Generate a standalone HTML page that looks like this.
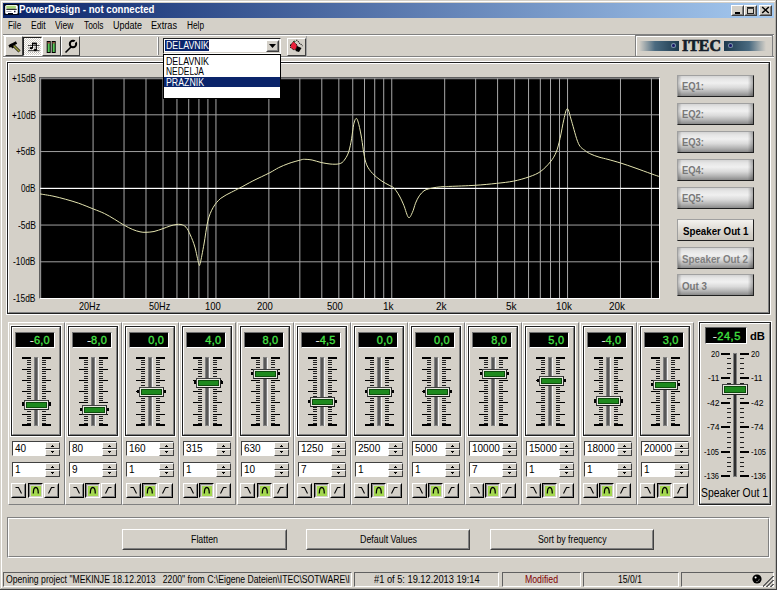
<!DOCTYPE html>
<html><head><meta charset="utf-8"><title>PowerDesign</title>
<style>
html,body{margin:0;padding:0;width:777px;height:590px;overflow:hidden;background:#d4d0c8;}
body{position:relative;font-family:'Liberation Sans', sans-serif;}
body>div,body>svg{position:absolute;}
</style></head><body>
<div style="left:0px;top:0px;width:777px;height:590px;background:#d4d0c8;"></div>
<div style="left:1px;top:1px;width:774px;height:1px;background:#ffffff;"></div>
<div style="left:1px;top:1px;width:1px;height:587px;background:#ffffff;"></div>
<div style="left:0px;top:589px;width:777px;height:1px;background:#404040;"></div>
<div style="left:776px;top:0px;width:1px;height:590px;background:#404040;"></div>
<div style="left:1px;top:588px;width:775px;height:1px;background:#b4b2ac;"></div>
<div style="left:775px;top:1px;width:1px;height:588px;background:#b4b2ac;"></div>
<div style="left:3px;top:3px;width:771px;height:15px;background:linear-gradient(to right,#0a246a,#a6caf0)"></div>
<svg style="left:4px;top:4px" width="15" height="12" viewBox="0 0 15 12"><rect x="0" y="0" width="15" height="11" fill="#020616"/><rect x="1.2" y="1" width="12.6" height="9" rx="1.6" fill="#fff"/><rect x="2.3" y="1.7" width="9.6" height="3.1" rx="0.8" fill="#a8d878"/><rect x="2.3" y="4.8" width="10.4" height="1" fill="#000"/><rect x="2.5" y="7" width="5" height="0.8" fill="#9090a0"/><rect x="10" y="6.8" width="1.5" height="1.5" fill="#202040"/><rect x="4" y="9" width="5" height="2" fill="#020616"/></svg>
<div style="left:19.30px;top:5.30px;font-family:'Liberation Sans', sans-serif;font-size:10px;font-weight:bold;color:#fff;line-height:1;white-space:pre;transform:scaleX(0.9639);transform-origin:0 0;">PowerDesign - not connected</div>
<div style="left:731px;top:5px;width:13px;height:11px;box-sizing:border-box;border:1px solid;border-color:#ffffff #404040 #404040 #ffffff;background:#d4d0c8;"></div>
<div style="left:732px;top:6px;width:11px;height:9px;box-sizing:border-box;border:1px solid;border-color:#d4d0c8 #808080 #808080 #d4d0c8;"></div>
<div style="left:744px;top:5px;width:13px;height:11px;box-sizing:border-box;border:1px solid;border-color:#ffffff #404040 #404040 #ffffff;background:#d4d0c8;"></div>
<div style="left:745px;top:6px;width:11px;height:9px;box-sizing:border-box;border:1px solid;border-color:#d4d0c8 #808080 #808080 #d4d0c8;"></div>
<div style="left:759px;top:5px;width:13px;height:11px;box-sizing:border-box;border:1px solid;border-color:#ffffff #404040 #404040 #ffffff;background:#d4d0c8;"></div>
<div style="left:760px;top:6px;width:11px;height:9px;box-sizing:border-box;border:1px solid;border-color:#d4d0c8 #808080 #808080 #d4d0c8;"></div>
<div style="left:735px;top:12px;width:5px;height:2px;background:#000;"></div>
<div style="left:747px;top:7px;width:7px;height:7px;box-sizing:border-box;border:1px solid;border-color:#202020 #202020 #202020 #202020;"></div>
<div style="left:747px;top:8px;width:7px;height:1px;background:#404040;"></div>
<svg style="left:761px;top:6px" width="9" height="8" viewBox="0 0 9 8"><path d="M1.2 1 L7.8 7 M7.8 1 L1.2 7" stroke="#000" stroke-width="1.5"/></svg>
<div style="left:8.00px;top:20.50px;font-family:'Liberation Sans', sans-serif;font-size:10px;font-weight:normal;color:#000;line-height:1;white-space:pre;transform:scaleX(0.8186);transform-origin:0 0;">File</div>
<div style="left:30.50px;top:20.50px;font-family:'Liberation Sans', sans-serif;font-size:10px;font-weight:normal;color:#000;line-height:1;white-space:pre;transform:scaleX(0.8471);transform-origin:0 0;">Edit</div>
<div style="left:55.00px;top:20.50px;font-family:'Liberation Sans', sans-serif;font-size:10px;font-weight:normal;color:#000;line-height:1;white-space:pre;transform:scaleX(0.8558);transform-origin:0 0;">View</div>
<div style="left:83.50px;top:20.50px;font-family:'Liberation Sans', sans-serif;font-size:10px;font-weight:normal;color:#000;line-height:1;white-space:pre;transform:scaleX(0.8348);transform-origin:0 0;">Tools</div>
<div style="left:113.30px;top:20.50px;font-family:'Liberation Sans', sans-serif;font-size:10px;font-weight:normal;color:#000;line-height:1;white-space:pre;transform:scaleX(0.8992);transform-origin:0 0;">Update</div>
<div style="left:151.40px;top:20.50px;font-family:'Liberation Sans', sans-serif;font-size:10px;font-weight:normal;color:#000;line-height:1;white-space:pre;transform:scaleX(0.9173);transform-origin:0 0;">Extras</div>
<div style="left:186.90px;top:20.50px;font-family:'Liberation Sans', sans-serif;font-size:10px;font-weight:normal;color:#000;line-height:1;white-space:pre;transform:scaleX(0.8261);transform-origin:0 0;">Help</div>
<div style="left:3px;top:34px;width:771px;height:1px;background:#808080;"></div>
<div style="left:3px;top:35px;width:771px;height:1px;background:#ffffff;"></div>
<div style="left:3px;top:56px;width:771px;height:1px;background:#808080;"></div>
<div style="left:3px;top:57px;width:771px;height:1px;background:#ffffff;"></div>
<div style="left:4px;top:36px;width:1px;height:20px;background:#ffffff;"></div>
<div style="left:5px;top:36px;width:18px;height:20px;box-sizing:border-box;border:1px solid;border-color:#ffffff #404040 #404040 #ffffff;"></div>
<div style="left:23px;top:37px;width:19px;height:19px;box-sizing:border-box;border:1px solid;border-color:#202020 #fff #fff #202020;background:repeating-conic-gradient(#ffffff 0 25%,#d4d0c8 0 50%) 0 0/2px 2px"></div>
<div style="left:42px;top:36px;width:19px;height:20px;box-sizing:border-box;border:1px solid;border-color:#ffffff #404040 #404040 #ffffff;"></div>
<div style="left:61px;top:36px;width:19px;height:20px;box-sizing:border-box;border:1px solid;border-color:#ffffff #404040 #404040 #ffffff;"></div>
<svg style="left:5px;top:36px" width="18" height="20" viewBox="0 0 18 20"><path d="M8.5 9.5 L14.5 15.5" stroke="#202010" stroke-width="3"/><path d="M8.5 9.5 L14.5 15.5" stroke="#a0a040" stroke-width="1.4"/><path d="M4 10.5 L11.5 6.5" stroke="#000" stroke-width="2.6"/><path d="M5.5 8 L8 12" stroke="#000" stroke-width="2"/></svg>
<svg style="left:23px;top:36px" width="19" height="20" viewBox="0 0 19 20"><path d="M5 9.5 H16.5 M5 14.5 H16.5" stroke="#505050" stroke-width="1"/><path d="M5 12 H16.5 M5 16 H16.5" stroke="#909090" stroke-width="1" stroke-dasharray="1 1"/><path d="M9.5 7.5 V12 M13.3 7.5 V14" stroke="#000" stroke-width="1.1"/><path d="M9 7.5 H13.8" stroke="#000" stroke-width="1.8"/><ellipse cx="8.2" cy="12.2" rx="1.6" ry="1.1" fill="#000"/><ellipse cx="12.2" cy="14.2" rx="1.6" ry="1.1" fill="#000"/></svg>
<svg style="left:42px;top:36px" width="19" height="20" viewBox="0 0 19 20"><rect x="5.2" y="5.5" width="3" height="11" fill="#58c858" stroke="#000" stroke-width="1"/><rect x="10.2" y="5.5" width="3" height="11" fill="#58c858" stroke="#000" stroke-width="1"/><rect x="5.7" y="6" width="2" height="1.5" fill="#a04040"/><rect x="10.7" y="6" width="2" height="1.5" fill="#a04040"/></svg>
<svg style="left:61px;top:36px" width="19" height="20" viewBox="0 0 19 20"><path d="M4.5 16.5 L10 11" stroke="#000" stroke-width="1.6"/><circle cx="12" cy="8" r="3.2" fill="none" stroke="#000" stroke-width="2"/><path d="M12 8 L15.5 4.5" stroke="#d4d0c8" stroke-width="1.6"/></svg>
<div style="left:157px;top:37px;width:1px;height:18px;background:#ffffff;"></div>
<div style="left:158px;top:37px;width:1px;height:18px;background:#808080;"></div>
<div style="left:163px;top:38px;width:118px;height:16px;box-sizing:border-box;border:1px solid;border-color:#202020 #ffffff #ffffff #202020;background:#ffffff;"></div>
<div style="left:164px;top:39px;width:116px;height:14px;box-sizing:border-box;border:1px solid;border-color:#ffffff #d4d0c8 #d4d0c8 #ffffff;"></div>
<div style="left:165px;top:40px;width:44px;height:11px;background:#0a246a;"></div>
<div style="left:166.00px;top:40.50px;font-family:'Liberation Sans', sans-serif;font-size:10px;font-weight:normal;color:#fff;line-height:1;white-space:pre;transform:scaleX(0.8823);transform-origin:0 0;">DELAVNIK</div>
<div style="left:266px;top:40px;width:13px;height:12px;box-sizing:border-box;border:1px solid;border-color:#ffffff #404040 #404040 #ffffff;background:#d4d0c8;"></div>
<div style="left:267px;top:41px;width:11px;height:10px;box-sizing:border-box;border:1px solid;border-color:#d4d0c8 #808080 #808080 #d4d0c8;"></div>
<svg style="left:269px;top:44px" width="7" height="4" viewBox="0 0 7 4"><path d="M0 0 H7 L3.5 4 Z" fill="#000"/></svg>
<div style="left:287px;top:38px;width:19px;height:18px;box-sizing:border-box;border:1px solid;border-color:#ffffff #404040 #404040 #ffffff;"></div>
<div style="left:306px;top:36px;width:1px;height:21px;background:#a0a0a0;"></div>
<svg style="left:286px;top:37px" width="20" height="19" viewBox="0 0 20 19"><path d="M4.5 8 L7.5 4.5 L11 8 L11 11.5 L8 13 L4.5 10.5 Z" fill="#e8203a" stroke="#000" stroke-width="1" stroke-dasharray="1.2 0.8"/><path d="M7 4.5 L8.5 3.5 L10 5 Z" fill="#104010"/><path d="M11 9 L15.5 11 L13 15 L9.5 14 Z" fill="#000"/><path d="M10.5 3 L16.5 9" stroke="#000" stroke-width="1.1" stroke-dasharray="1 1"/></svg>
<div style="left:635px;top:35px;width:138px;height:22px;box-sizing:border-box;border:1px solid;border-color:#808080 #808080 #808080 #808080;"></div>
<div style="left:636px;top:36px;width:136px;height:20px;box-sizing:border-box;border:1px solid;border-color:#ffffff #d4d0c8 #d4d0c8 #ffffff;"></div>
<div style="left:639px;top:41px;width:40px;height:10px;background:linear-gradient(to right,#d4d0c8,#4a6a80 40%,#1c3a4e)"></div>
<div style="left:724px;top:41px;width:42px;height:10px;background:linear-gradient(to right,#1c3a4e,#4a6a80 60%,#d4d0c8)"></div>
<div style="left:672px;top:44px;width:3px;height:3px;border-radius:50%;background:#18186a;box-shadow:0 0 0 1px #7890a8"></div>
<div style="left:729px;top:44px;width:3px;height:3px;border-radius:50%;background:#18186a;box-shadow:0 0 0 1px #7890a8"></div>
<div style="left:681.80px;top:36.92px;font-family:'Liberation Serif', serif;font-size:17.5px;font-weight:bold;color:#141e2a;line-height:1;white-space:pre;transform:scaleX(0.9113);transform-origin:0 0;-webkit-text-stroke:0.7px #141e2a;">ITEC</div>
<div style="left:6px;top:61px;width:765px;height:254px;box-sizing:border-box;border:1px solid;border-color:#ffffff #ffffff #ffffff #ffffff;"></div>
<div style="left:7px;top:62px;width:763px;height:252px;box-sizing:border-box;border:1px solid;border-color:#202020 #202020 #202020 #202020;"></div>
<div style="left:8px;top:63px;width:761px;height:250px;box-sizing:border-box;border:1px solid;border-color:#ffffff #808080 #808080 #ffffff;"></div>
<div style="left:39px;top:77px;width:621px;height:222px;box-sizing:border-box;border:1px solid;border-color:#606060 #ffffff #ffffff #606060;"></div>
<div style="left:40px;top:78px;width:619px;height:220px;background:#000;"></div>
<svg style="left:40px;top:78px" width="619" height="220" viewBox="0 0 619 220"><rect x="0.15" y="0" width="1" height="220" fill="#a8a8a8"/><rect x="52.57" y="0" width="1" height="220" fill="#a8a8a8"/><rect x="83.53" y="0" width="1" height="220" fill="#a8a8a8"/><rect x="105.49" y="0" width="1" height="220" fill="#a8a8a8"/><rect x="122.53" y="0" width="1" height="220" fill="#a8a8a8"/><rect x="136.45" y="0" width="1" height="220" fill="#a8a8a8"/><rect x="148.22" y="0" width="1" height="220" fill="#a8a8a8"/><rect x="158.41" y="0" width="1" height="220" fill="#a8a8a8"/><rect x="167.41" y="0" width="1" height="220" fill="#a8a8a8"/><rect x="175.45" y="0" width="1" height="220" fill="#a8a8a8"/><rect x="228.37" y="0" width="1" height="220" fill="#a8a8a8"/><rect x="259.33" y="0" width="1" height="220" fill="#a8a8a8"/><rect x="281.29" y="0" width="1" height="220" fill="#a8a8a8"/><rect x="298.33" y="0" width="1" height="220" fill="#a8a8a8"/><rect x="312.25" y="0" width="1" height="220" fill="#a8a8a8"/><rect x="324.02" y="0" width="1" height="220" fill="#a8a8a8"/><rect x="334.21" y="0" width="1" height="220" fill="#a8a8a8"/><rect x="343.21" y="0" width="1" height="220" fill="#a8a8a8"/><rect x="351.25" y="0" width="1" height="220" fill="#a8a8a8"/><rect x="404.17" y="0" width="1" height="220" fill="#a8a8a8"/><rect x="435.13" y="0" width="1" height="220" fill="#a8a8a8"/><rect x="457.09" y="0" width="1" height="220" fill="#a8a8a8"/><rect x="474.13" y="0" width="1" height="220" fill="#a8a8a8"/><rect x="488.05" y="0" width="1" height="220" fill="#a8a8a8"/><rect x="499.82" y="0" width="1" height="220" fill="#a8a8a8"/><rect x="510.01" y="0" width="1" height="220" fill="#a8a8a8"/><rect x="519.01" y="0" width="1" height="220" fill="#a8a8a8"/><rect x="527.05" y="0" width="1" height="220" fill="#a8a8a8"/><rect x="579.97" y="0" width="1" height="220" fill="#a8a8a8"/><rect x="610.93" y="0" width="1" height="220" fill="#a8a8a8"/><rect x="0" y="0.20" width="619" height="1" fill="#a0a0a0"/><rect x="0" y="36.30" width="619" height="1" fill="#a0a0a0"/><rect x="0" y="73.05" width="619" height="1" fill="#a0a0a0"/><rect x="0" y="109.80" width="619" height="1.2" fill="#ffffff"/><rect x="0" y="146.55" width="619" height="1" fill="#a0a0a0"/><rect x="0" y="183.30" width="619" height="1" fill="#a0a0a0"/><path d="M0.0 115.9 C2.1 116.3 8.6 117.2 12.9 118.1 C17.2 119.0 21.4 120.1 25.7 121.3 C30.0 122.5 34.0 123.6 38.6 125.2 C43.2 126.8 49.1 129.3 53.4 131.0 C57.7 132.7 60.9 133.8 64.4 135.5 C67.9 137.2 71.3 139.3 74.6 141.3 C77.9 143.3 81.3 145.6 84.3 147.3 C87.3 149.0 90.1 150.4 92.7 151.5 C95.3 152.6 97.8 153.3 100.0 153.8 C102.2 154.3 103.7 154.4 106.0 154.3 C108.3 154.2 111.2 154.1 114.0 153.5 C116.8 152.9 120.3 151.5 123.0 150.6 C125.7 149.7 127.8 148.7 130.0 148.0 C132.2 147.3 134.2 146.8 136.0 146.6 C137.8 146.3 139.3 146.1 141.0 146.5 C142.7 146.9 144.4 147.5 146.0 149.2 C147.6 150.9 148.8 153.6 150.3 156.9 C151.8 160.2 153.5 164.3 154.9 169.1 C156.3 173.9 157.8 182.8 158.7 185.5 C159.6 188.2 159.3 188.6 160.2 185.3 C161.1 182.1 162.7 173.0 164.0 166.0 C165.3 159.0 166.3 149.3 167.8 143.2 C169.3 137.1 171.0 133.2 173.2 129.4 C175.4 125.6 177.8 122.8 180.8 120.3 C183.9 117.8 188.3 115.9 191.5 114.2 C194.7 112.5 196.4 111.8 200.0 109.9 C203.6 108.0 208.0 105.4 212.9 102.9 C217.8 100.4 225.3 97.0 229.6 94.8 C233.9 92.6 235.4 91.3 238.6 89.7 C241.8 88.1 245.2 86.7 248.9 85.4 C252.5 84.1 257.9 82.7 260.5 82.0 C263.1 81.3 262.5 81.3 264.4 81.3 C266.3 81.3 269.3 81.5 272.1 82.0 C274.9 82.5 277.7 83.8 281.1 84.5 C284.5 85.2 289.4 86.1 292.7 86.2 C296.0 86.3 298.7 86.2 300.8 85.3 C302.9 84.4 303.8 82.9 305.1 81.0 C306.4 79.1 307.6 77.2 308.7 73.8 C309.8 70.4 310.8 65.4 311.6 60.8 C312.4 56.2 312.9 49.8 313.7 46.4 C314.5 43.0 315.4 40.4 316.3 40.4 C317.2 40.4 317.9 43.0 318.8 46.4 C319.7 49.8 320.9 56.0 321.7 60.8 C322.5 65.6 323.0 70.9 323.8 75.2 C324.6 79.5 325.2 83.4 326.7 86.8 C328.1 90.2 330.1 92.8 332.5 95.4 C334.9 98.0 338.2 100.6 341.1 102.6 C344.0 104.6 347.8 106.5 349.8 107.6 C351.8 108.7 352.0 108.4 353.1 109.3 C354.2 110.2 355.1 111.2 356.2 112.8 C357.3 114.4 358.7 116.5 360.0 119.0 C361.3 121.5 362.5 124.1 363.9 127.5 C365.3 130.9 367.1 138.3 368.5 139.5 C369.9 140.7 371.2 136.8 372.4 134.4 C373.6 132.0 374.4 128.0 375.5 125.2 C376.6 122.4 377.9 119.9 379.3 117.8 C380.7 115.7 382.4 114.0 384.0 112.8 C385.6 111.7 386.6 111.5 388.6 110.9 C390.7 110.3 393.7 109.7 396.3 109.3 C398.9 108.9 401.7 108.8 404.0 108.6 C406.3 108.4 404.8 108.6 410.0 108.4 C415.2 108.2 427.4 107.8 435.1 107.3 C442.8 106.8 449.9 106.1 456.3 105.4 C462.7 104.7 468.2 104.2 473.7 103.1 C479.2 102.0 484.7 100.4 489.2 98.8 C493.7 97.2 497.2 95.9 500.7 93.4 C504.2 90.9 507.8 87.0 510.4 83.8 C513.0 80.6 514.6 78.0 516.2 74.1 C517.8 70.2 518.7 66.1 520.0 60.6 C521.3 55.1 522.7 46.3 523.9 41.3 C525.1 36.3 526.1 30.4 527.4 30.7 C528.7 31.0 529.8 37.4 531.6 43.2 C533.4 49.0 536.1 60.5 538.4 65.4 C540.6 70.3 543.0 70.8 545.1 72.6 C547.2 74.4 548.6 75.0 550.9 76.1 C553.2 77.2 556.1 78.2 559.0 79.1 C561.9 80.0 564.4 80.4 568.0 81.4 C571.6 82.4 576.1 83.6 580.6 85.0 C585.1 86.4 589.9 88.1 595.0 89.9 C600.1 91.7 607.1 94.3 611.3 95.8 C615.5 97.3 618.5 98.3 620.0 98.8" fill="none" stroke="#e4e4b0" stroke-width="1"/></svg>
<div style="left:11.80px;top:72.88px;font-family:'Liberation Sans', sans-serif;font-size:10.5px;font-weight:normal;color:#000;line-height:1;white-space:pre;transform:scaleX(0.7829);transform-origin:0 0;">+15dB</div>
<div style="left:11.80px;top:109.88px;font-family:'Liberation Sans', sans-serif;font-size:10.5px;font-weight:normal;color:#000;line-height:1;white-space:pre;transform:scaleX(0.7829);transform-origin:0 0;">+10dB</div>
<div style="left:16.30px;top:145.88px;font-family:'Liberation Sans', sans-serif;font-size:10.5px;font-weight:normal;color:#000;line-height:1;white-space:pre;transform:scaleX(0.7854);transform-origin:0 0;">+5dB</div>
<div style="left:21.30px;top:182.88px;font-family:'Liberation Sans', sans-serif;font-size:10.5px;font-weight:normal;color:#000;line-height:1;white-space:pre;transform:scaleX(0.7759);transform-origin:0 0;">0dB</div>
<div style="left:17.80px;top:219.88px;font-family:'Liberation Sans', sans-serif;font-size:10.5px;font-weight:normal;color:#000;line-height:1;white-space:pre;transform:scaleX(0.8113);transform-origin:0 0;">-5dB</div>
<div style="left:13.30px;top:255.88px;font-family:'Liberation Sans', sans-serif;font-size:10.5px;font-weight:normal;color:#000;line-height:1;white-space:pre;transform:scaleX(0.8027);transform-origin:0 0;">-10dB</div>
<div style="left:13.30px;top:292.88px;font-family:'Liberation Sans', sans-serif;font-size:10.5px;font-weight:normal;color:#000;line-height:1;white-space:pre;transform:scaleX(0.8027);transform-origin:0 0;">-15dB</div>
<div style="left:79.02px;top:300.57px;font-family:'Liberation Sans', sans-serif;font-size:10.5px;font-weight:normal;color:#000;line-height:1;white-space:pre;transform:scaleX(0.8648);transform-origin:0 0;">20Hz</div>
<div style="left:148.98px;top:300.57px;font-family:'Liberation Sans', sans-serif;font-size:10.5px;font-weight:normal;color:#000;line-height:1;white-space:pre;transform:scaleX(0.8648);transform-origin:0 0;">50Hz</div>
<div style="left:204.55px;top:300.57px;font-family:'Liberation Sans', sans-serif;font-size:10.5px;font-weight:normal;color:#000;line-height:1;white-space:pre;transform:scaleX(0.9070);transform-origin:0 0;">100</div>
<div style="left:257.47px;top:300.57px;font-family:'Liberation Sans', sans-serif;font-size:10.5px;font-weight:normal;color:#000;line-height:1;white-space:pre;transform:scaleX(0.9070);transform-origin:0 0;">200</div>
<div style="left:327.43px;top:300.57px;font-family:'Liberation Sans', sans-serif;font-size:10.5px;font-weight:normal;color:#000;line-height:1;white-space:pre;transform:scaleX(0.9070);transform-origin:0 0;">500</div>
<div style="left:383.00px;top:300.57px;font-family:'Liberation Sans', sans-serif;font-size:10.5px;font-weight:normal;color:#000;line-height:1;white-space:pre;transform:scaleX(0.9555);transform-origin:0 0;">1k</div>
<div style="left:435.92px;top:300.57px;font-family:'Liberation Sans', sans-serif;font-size:10.5px;font-weight:normal;color:#000;line-height:1;white-space:pre;transform:scaleX(0.9555);transform-origin:0 0;">2k</div>
<div style="left:505.88px;top:300.57px;font-family:'Liberation Sans', sans-serif;font-size:10.5px;font-weight:normal;color:#000;line-height:1;white-space:pre;transform:scaleX(0.9555);transform-origin:0 0;">5k</div>
<div style="left:556.15px;top:300.57px;font-family:'Liberation Sans', sans-serif;font-size:10.5px;font-weight:normal;color:#000;line-height:1;white-space:pre;transform:scaleX(0.9387);transform-origin:0 0;">10k</div>
<div style="left:609.07px;top:300.57px;font-family:'Liberation Sans', sans-serif;font-size:10.5px;font-weight:normal;color:#000;line-height:1;white-space:pre;transform:scaleX(0.9387);transform-origin:0 0;">20k</div>
<div style="left:677px;top:75px;width:77px;height:22px;box-sizing:border-box;border:1px solid;border-color:#a0a0a0 #202020 #202020 #a0a0a0;background:linear-gradient(#d4d4d4 0%,#e6e6e6 15%,#f0f0f0 35%,#dadada 58%,#b4b4b4 80%,#8a8a8a 100%)"></div>
<div style="left:678px;top:76px;width:75px;height:20px;background:linear-gradient(to right,rgba(0,0,0,.22),rgba(0,0,0,0) 5%,rgba(0,0,0,0) 93%,rgba(0,0,0,.28))"></div>
<div style="left:682.00px;top:81.08px;font-family:'Liberation Sans', sans-serif;font-size:10.5px;font-weight:bold;color:#787878;line-height:1;white-space:pre;transform:scaleX(0.8974);transform-origin:0 0;">EQ1:</div>
<div style="left:677px;top:103px;width:77px;height:22px;box-sizing:border-box;border:1px solid;border-color:#a0a0a0 #202020 #202020 #a0a0a0;background:linear-gradient(#d4d4d4 0%,#e6e6e6 15%,#f0f0f0 35%,#dadada 58%,#b4b4b4 80%,#8a8a8a 100%)"></div>
<div style="left:678px;top:104px;width:75px;height:20px;background:linear-gradient(to right,rgba(0,0,0,.22),rgba(0,0,0,0) 5%,rgba(0,0,0,0) 93%,rgba(0,0,0,.28))"></div>
<div style="left:682.00px;top:109.08px;font-family:'Liberation Sans', sans-serif;font-size:10.5px;font-weight:bold;color:#787878;line-height:1;white-space:pre;transform:scaleX(0.8974);transform-origin:0 0;">EQ2:</div>
<div style="left:677px;top:131px;width:77px;height:22px;box-sizing:border-box;border:1px solid;border-color:#a0a0a0 #202020 #202020 #a0a0a0;background:linear-gradient(#d4d4d4 0%,#e6e6e6 15%,#f0f0f0 35%,#dadada 58%,#b4b4b4 80%,#8a8a8a 100%)"></div>
<div style="left:678px;top:132px;width:75px;height:20px;background:linear-gradient(to right,rgba(0,0,0,.22),rgba(0,0,0,0) 5%,rgba(0,0,0,0) 93%,rgba(0,0,0,.28))"></div>
<div style="left:682.00px;top:137.07px;font-family:'Liberation Sans', sans-serif;font-size:10.5px;font-weight:bold;color:#787878;line-height:1;white-space:pre;transform:scaleX(0.8974);transform-origin:0 0;">EQ3:</div>
<div style="left:677px;top:159px;width:77px;height:22px;box-sizing:border-box;border:1px solid;border-color:#a0a0a0 #202020 #202020 #a0a0a0;background:linear-gradient(#d4d4d4 0%,#e6e6e6 15%,#f0f0f0 35%,#dadada 58%,#b4b4b4 80%,#8a8a8a 100%)"></div>
<div style="left:678px;top:160px;width:75px;height:20px;background:linear-gradient(to right,rgba(0,0,0,.22),rgba(0,0,0,0) 5%,rgba(0,0,0,0) 93%,rgba(0,0,0,.28))"></div>
<div style="left:682.00px;top:165.07px;font-family:'Liberation Sans', sans-serif;font-size:10.5px;font-weight:bold;color:#787878;line-height:1;white-space:pre;transform:scaleX(0.8974);transform-origin:0 0;">EQ4:</div>
<div style="left:677px;top:187px;width:77px;height:22px;box-sizing:border-box;border:1px solid;border-color:#a0a0a0 #202020 #202020 #a0a0a0;background:linear-gradient(#d4d4d4 0%,#e6e6e6 15%,#f0f0f0 35%,#dadada 58%,#b4b4b4 80%,#8a8a8a 100%)"></div>
<div style="left:678px;top:188px;width:75px;height:20px;background:linear-gradient(to right,rgba(0,0,0,.22),rgba(0,0,0,0) 5%,rgba(0,0,0,0) 93%,rgba(0,0,0,.28))"></div>
<div style="left:682.00px;top:193.07px;font-family:'Liberation Sans', sans-serif;font-size:10.5px;font-weight:bold;color:#787878;line-height:1;white-space:pre;transform:scaleX(0.8974);transform-origin:0 0;">EQ5:</div>
<div style="left:677px;top:219px;width:77px;height:22px;box-sizing:border-box;border:1px solid;border-color:#a0a0a0 #202020 #202020 #a0a0a0;background:linear-gradient(#f4f3ef,#d4d0c8 70%,#c8c4bc)"></div>
<div style="left:683.00px;top:226.07px;font-family:'Liberation Sans', sans-serif;font-size:10.5px;font-weight:bold;color:#000;line-height:1;white-space:pre;transform:scaleX(0.9274);transform-origin:0 0;">Speaker Out 1</div>
<div style="left:677px;top:247px;width:77px;height:22px;box-sizing:border-box;border:1px solid;border-color:#a0a0a0 #202020 #202020 #a0a0a0;background:linear-gradient(#d4d4d4 0%,#e6e6e6 15%,#f0f0f0 35%,#dadada 58%,#b4b4b4 80%,#8a8a8a 100%)"></div>
<div style="left:678px;top:248px;width:75px;height:20px;background:linear-gradient(to right,rgba(0,0,0,.22),rgba(0,0,0,0) 5%,rgba(0,0,0,0) 93%,rgba(0,0,0,.28))"></div>
<div style="left:682.00px;top:254.07px;font-family:'Liberation Sans', sans-serif;font-size:10.5px;font-weight:bold;color:#808080;line-height:1;white-space:pre;transform:scaleX(0.9345);transform-origin:0 0;">Speaker Out 2</div>
<div style="left:677px;top:274px;width:77px;height:22px;box-sizing:border-box;border:1px solid;border-color:#a0a0a0 #202020 #202020 #a0a0a0;background:linear-gradient(#d4d4d4 0%,#e6e6e6 15%,#f0f0f0 35%,#dadada 58%,#b4b4b4 80%,#8a8a8a 100%)"></div>
<div style="left:678px;top:275px;width:75px;height:20px;background:linear-gradient(to right,rgba(0,0,0,.22),rgba(0,0,0,0) 5%,rgba(0,0,0,0) 93%,rgba(0,0,0,.28))"></div>
<div style="left:682.00px;top:281.07px;font-family:'Liberation Sans', sans-serif;font-size:10.5px;font-weight:bold;color:#787878;line-height:1;white-space:pre;transform:scaleX(0.9313);transform-origin:0 0;">Out 3</div>
<div style="left:8px;top:322px;width:57px;height:183px;box-sizing:border-box;border:1px solid;border-color:#ffffff #808080 #808080 #ffffff;"></div>
<div style="left:10px;top:325px;width:52px;height:112px;box-sizing:border-box;border:1px solid;border-color:#ffffff #ffffff #ffffff #ffffff;"></div>
<div style="left:11px;top:326px;width:50px;height:110px;box-sizing:border-box;border:1px solid;border-color:#202020 #202020 #202020 #202020;"></div>
<div style="left:12px;top:327px;width:48px;height:108px;box-sizing:border-box;border:1px solid;border-color:#ffffff #808080 #808080 #ffffff;"></div>
<div style="left:15px;top:332px;width:40px;height:16px;box-sizing:border-box;border:1px solid;border-color:#707070 #ffffff #ffffff #707070;"></div>
<div style="left:16px;top:333px;width:38px;height:14px;background:#000;"></div>
<div style="left:30.03px;top:334.85px;font-family:'Liberation Sans', sans-serif;font-size:11px;font-weight:normal;color:#48e448;line-height:1;white-space:pre;letter-spacing:0.2px;-webkit-text-stroke:0.3px;"><span style="color:#e8e8e8">-</span>6,0</div>
<svg style="left:22px;top:355px" width="29" height="72" shape-rendering="crispEdges"><rect x="0" y="2" width="9" height="2"/><rect x="20" y="2" width="9" height="2"/><rect x="5" y="5" width="4" height="1" fill="#202020"/><rect x="20" y="5" width="4" height="1" fill="#202020"/><rect x="5" y="7" width="4" height="1" fill="#202020"/><rect x="20" y="7" width="4" height="1" fill="#202020"/><rect x="5" y="9" width="4" height="1" fill="#202020"/><rect x="20" y="9" width="4" height="1" fill="#202020"/><rect x="5" y="12" width="4" height="1" fill="#202020"/><rect x="20" y="12" width="4" height="1" fill="#202020"/><rect x="0" y="14" width="9" height="1"/><rect x="20" y="14" width="9" height="1"/><rect x="5" y="16" width="4" height="1" fill="#202020"/><rect x="20" y="16" width="4" height="1" fill="#202020"/><rect x="5" y="18" width="4" height="1" fill="#202020"/><rect x="20" y="18" width="4" height="1" fill="#202020"/><rect x="5" y="21" width="4" height="1" fill="#202020"/><rect x="20" y="21" width="4" height="1" fill="#202020"/><rect x="5" y="23" width="4" height="1" fill="#202020"/><rect x="20" y="23" width="4" height="1" fill="#202020"/><rect x="0" y="25" width="9" height="1"/><rect x="20" y="25" width="9" height="1"/><rect x="5" y="27" width="4" height="1" fill="#202020"/><rect x="20" y="27" width="4" height="1" fill="#202020"/><rect x="5" y="30" width="4" height="1" fill="#202020"/><rect x="20" y="30" width="4" height="1" fill="#202020"/><rect x="5" y="32" width="4" height="1" fill="#202020"/><rect x="20" y="32" width="4" height="1" fill="#202020"/><rect x="5" y="34" width="4" height="1" fill="#202020"/><rect x="20" y="34" width="4" height="1" fill="#202020"/><rect x="0" y="36" width="9" height="1"/><rect x="20" y="36" width="9" height="1"/><rect x="5" y="38" width="4" height="1" fill="#202020"/><rect x="20" y="38" width="4" height="1" fill="#202020"/><rect x="5" y="41" width="4" height="1" fill="#202020"/><rect x="20" y="41" width="4" height="1" fill="#202020"/><rect x="5" y="43" width="4" height="1" fill="#202020"/><rect x="20" y="43" width="4" height="1" fill="#202020"/><rect x="5" y="45" width="4" height="1" fill="#202020"/><rect x="20" y="45" width="4" height="1" fill="#202020"/><rect x="0" y="47" width="9" height="1"/><rect x="20" y="47" width="9" height="1"/><rect x="5" y="50" width="4" height="1" fill="#202020"/><rect x="20" y="50" width="4" height="1" fill="#202020"/><rect x="5" y="52" width="4" height="1" fill="#202020"/><rect x="20" y="52" width="4" height="1" fill="#202020"/><rect x="5" y="54" width="4" height="1" fill="#202020"/><rect x="20" y="54" width="4" height="1" fill="#202020"/><rect x="5" y="56" width="4" height="1" fill="#202020"/><rect x="20" y="56" width="4" height="1" fill="#202020"/><rect x="0" y="59" width="9" height="1"/><rect x="20" y="59" width="9" height="1"/><rect x="5" y="61" width="4" height="1" fill="#202020"/><rect x="20" y="61" width="4" height="1" fill="#202020"/><rect x="5" y="63" width="4" height="1" fill="#202020"/><rect x="20" y="63" width="4" height="1" fill="#202020"/><rect x="5" y="65" width="4" height="1" fill="#202020"/><rect x="20" y="65" width="4" height="1" fill="#202020"/><rect x="5" y="68" width="4" height="1" fill="#202020"/><rect x="20" y="68" width="4" height="1" fill="#202020"/><rect x="0" y="69" width="9" height="2"/><rect x="20" y="69" width="9" height="2"/></svg>
<div style="left:34px;top:357px;width:4px;height:69px;background:#808080;"></div>
<div style="left:35px;top:358px;width:2px;height:67px;background:#585858;"></div>
<div style="left:38px;top:358px;width:1px;height:68px;background:#f0f0f0;"></div>
<div style="left:22px;top:403px;width:2px;height:3px;background:#000;"></div>
<div style="left:49px;top:403px;width:2px;height:3px;background:#000;"></div>
<div style="left:24px;top:400px;width:25px;height:10px;box-sizing:border-box;border:1px solid;border-color:#404040 #202020 #202020 #404040;background:#e8e8e0;"></div>
<div style="left:26px;top:402px;width:21px;height:6px;box-sizing:border-box;border:1px solid;border-color:#0c4c0c #0c4c0c #0c4c0c #0c4c0c;background:#1e8a1e;"></div>
<div style="left:12px;top:441px;width:48px;height:15px;box-sizing:border-box;border:1px solid;border-color:#404040 #ffffff #ffffff #404040;background:#ffffff;"></div>
<div style="left:15.00px;top:443.50px;font-family:'Liberation Sans', sans-serif;font-size:10px;font-weight:normal;color:#000;line-height:1;white-space:pre;">40</div>
<div style="left:45px;top:442px;width:15px;height:7px;box-sizing:border-box;border:1px solid;border-color:#ffffff #404040 #404040 #ffffff;background:#d4d0c8;"></div>
<div style="left:45px;top:449px;width:15px;height:7px;box-sizing:border-box;border:1px solid;border-color:#ffffff #404040 #404040 #ffffff;background:#d4d0c8;"></div>
<div style="left:52px;top:445px;width:1px;height:1px;background:#000;"></div>
<div style="left:51px;top:446px;width:3px;height:1px;background:#000;"></div>
<div style="left:51px;top:451px;width:3px;height:1px;background:#000;"></div>
<div style="left:52px;top:452px;width:1px;height:1px;background:#000;"></div>
<div style="left:12px;top:462px;width:48px;height:15px;box-sizing:border-box;border:1px solid;border-color:#404040 #ffffff #ffffff #404040;background:#ffffff;"></div>
<div style="left:15.00px;top:464.50px;font-family:'Liberation Sans', sans-serif;font-size:10px;font-weight:normal;color:#000;line-height:1;white-space:pre;">1</div>
<div style="left:45px;top:463px;width:15px;height:7px;box-sizing:border-box;border:1px solid;border-color:#ffffff #404040 #404040 #ffffff;background:#d4d0c8;"></div>
<div style="left:45px;top:470px;width:15px;height:7px;box-sizing:border-box;border:1px solid;border-color:#ffffff #404040 #404040 #ffffff;background:#d4d0c8;"></div>
<div style="left:52px;top:466px;width:1px;height:1px;background:#000;"></div>
<div style="left:51px;top:467px;width:3px;height:1px;background:#000;"></div>
<div style="left:51px;top:472px;width:3px;height:1px;background:#000;"></div>
<div style="left:52px;top:473px;width:1px;height:1px;background:#000;"></div>
<div style="left:11px;top:483px;width:15px;height:15px;box-sizing:border-box;border:1px solid;border-color:#ffffff #000000 #000000 #ffffff;background:#d4d0c8;"></div>
<div style="left:12px;top:484px;width:13px;height:13px;box-sizing:border-box;border:1px solid;border-color:#d4d0c8 #808080 #808080 #d4d0c8;"></div>
<svg style="left:11px;top:483px" width="15" height="15" viewBox="0 0 15 15"><path d="M4.5 4.5 H7.5 L10.5 10.5" fill="none" stroke="#000" stroke-width="1.1"/></svg>
<div style="left:28px;top:483px;width:15px;height:15px;box-sizing:border-box;border:1px solid;border-color:#000000 #ffffff #ffffff #000000;background:#d4d0c8;"></div>
<div style="left:29px;top:484px;width:13px;height:13px;box-sizing:border-box;border:1px solid;border-color:#808080 #d4d0c8 #d4d0c8 #808080;"></div>
<div style="left:31px;top:486px;width:10px;height:10px;background:#a4d850;"></div>
<svg style="left:28px;top:483px" width="15" height="15" viewBox="0 0 15 15"><path d="M5.3 10.5 C5.3 5.5 6.3 4.5 7.8 4.5 C9.3 4.5 10.3 5.5 10.3 10.5" fill="none" stroke="#000" stroke-width="1.3"/></svg>
<div style="left:44px;top:483px;width:15px;height:15px;box-sizing:border-box;border:1px solid;border-color:#ffffff #000000 #000000 #ffffff;background:#d4d0c8;"></div>
<div style="left:45px;top:484px;width:13px;height:13px;box-sizing:border-box;border:1px solid;border-color:#d4d0c8 #808080 #808080 #d4d0c8;"></div>
<svg style="left:44px;top:483px" width="15" height="15" viewBox="0 0 15 15"><path d="M4.5 10.5 L7.5 4.5 H10.5" fill="none" stroke="#000" stroke-width="1.1"/></svg>
<div style="left:65px;top:322px;width:57px;height:183px;box-sizing:border-box;border:1px solid;border-color:#ffffff #808080 #808080 #ffffff;"></div>
<div style="left:67px;top:325px;width:52px;height:112px;box-sizing:border-box;border:1px solid;border-color:#ffffff #ffffff #ffffff #ffffff;"></div>
<div style="left:68px;top:326px;width:50px;height:110px;box-sizing:border-box;border:1px solid;border-color:#202020 #202020 #202020 #202020;"></div>
<div style="left:69px;top:327px;width:48px;height:108px;box-sizing:border-box;border:1px solid;border-color:#ffffff #808080 #808080 #ffffff;"></div>
<div style="left:72px;top:332px;width:40px;height:16px;box-sizing:border-box;border:1px solid;border-color:#707070 #ffffff #ffffff #707070;"></div>
<div style="left:73px;top:333px;width:38px;height:14px;background:#000;"></div>
<div style="left:87.19px;top:334.85px;font-family:'Liberation Sans', sans-serif;font-size:11px;font-weight:normal;color:#48e448;line-height:1;white-space:pre;letter-spacing:0.2px;-webkit-text-stroke:0.3px;"><span style="color:#e8e8e8">-</span>8,0</div>
<svg style="left:79px;top:355px" width="29" height="72" shape-rendering="crispEdges"><rect x="0" y="2" width="9" height="2"/><rect x="20" y="2" width="9" height="2"/><rect x="5" y="5" width="4" height="1" fill="#202020"/><rect x="20" y="5" width="4" height="1" fill="#202020"/><rect x="5" y="7" width="4" height="1" fill="#202020"/><rect x="20" y="7" width="4" height="1" fill="#202020"/><rect x="5" y="9" width="4" height="1" fill="#202020"/><rect x="20" y="9" width="4" height="1" fill="#202020"/><rect x="5" y="12" width="4" height="1" fill="#202020"/><rect x="20" y="12" width="4" height="1" fill="#202020"/><rect x="0" y="14" width="9" height="1"/><rect x="20" y="14" width="9" height="1"/><rect x="5" y="16" width="4" height="1" fill="#202020"/><rect x="20" y="16" width="4" height="1" fill="#202020"/><rect x="5" y="18" width="4" height="1" fill="#202020"/><rect x="20" y="18" width="4" height="1" fill="#202020"/><rect x="5" y="21" width="4" height="1" fill="#202020"/><rect x="20" y="21" width="4" height="1" fill="#202020"/><rect x="5" y="23" width="4" height="1" fill="#202020"/><rect x="20" y="23" width="4" height="1" fill="#202020"/><rect x="0" y="25" width="9" height="1"/><rect x="20" y="25" width="9" height="1"/><rect x="5" y="27" width="4" height="1" fill="#202020"/><rect x="20" y="27" width="4" height="1" fill="#202020"/><rect x="5" y="30" width="4" height="1" fill="#202020"/><rect x="20" y="30" width="4" height="1" fill="#202020"/><rect x="5" y="32" width="4" height="1" fill="#202020"/><rect x="20" y="32" width="4" height="1" fill="#202020"/><rect x="5" y="34" width="4" height="1" fill="#202020"/><rect x="20" y="34" width="4" height="1" fill="#202020"/><rect x="0" y="36" width="9" height="1"/><rect x="20" y="36" width="9" height="1"/><rect x="5" y="38" width="4" height="1" fill="#202020"/><rect x="20" y="38" width="4" height="1" fill="#202020"/><rect x="5" y="41" width="4" height="1" fill="#202020"/><rect x="20" y="41" width="4" height="1" fill="#202020"/><rect x="5" y="43" width="4" height="1" fill="#202020"/><rect x="20" y="43" width="4" height="1" fill="#202020"/><rect x="5" y="45" width="4" height="1" fill="#202020"/><rect x="20" y="45" width="4" height="1" fill="#202020"/><rect x="0" y="47" width="9" height="1"/><rect x="20" y="47" width="9" height="1"/><rect x="5" y="50" width="4" height="1" fill="#202020"/><rect x="20" y="50" width="4" height="1" fill="#202020"/><rect x="5" y="52" width="4" height="1" fill="#202020"/><rect x="20" y="52" width="4" height="1" fill="#202020"/><rect x="5" y="54" width="4" height="1" fill="#202020"/><rect x="20" y="54" width="4" height="1" fill="#202020"/><rect x="5" y="56" width="4" height="1" fill="#202020"/><rect x="20" y="56" width="4" height="1" fill="#202020"/><rect x="0" y="59" width="9" height="1"/><rect x="20" y="59" width="9" height="1"/><rect x="5" y="61" width="4" height="1" fill="#202020"/><rect x="20" y="61" width="4" height="1" fill="#202020"/><rect x="5" y="63" width="4" height="1" fill="#202020"/><rect x="20" y="63" width="4" height="1" fill="#202020"/><rect x="5" y="65" width="4" height="1" fill="#202020"/><rect x="20" y="65" width="4" height="1" fill="#202020"/><rect x="5" y="68" width="4" height="1" fill="#202020"/><rect x="20" y="68" width="4" height="1" fill="#202020"/><rect x="0" y="69" width="9" height="2"/><rect x="20" y="69" width="9" height="2"/></svg>
<div style="left:91px;top:357px;width:4px;height:69px;background:#808080;"></div>
<div style="left:92px;top:358px;width:2px;height:67px;background:#585858;"></div>
<div style="left:95px;top:358px;width:1px;height:68px;background:#f0f0f0;"></div>
<div style="left:80px;top:408px;width:2px;height:3px;background:#000;"></div>
<div style="left:107px;top:408px;width:2px;height:3px;background:#000;"></div>
<div style="left:82px;top:405px;width:25px;height:10px;box-sizing:border-box;border:1px solid;border-color:#404040 #202020 #202020 #404040;background:#e8e8e0;"></div>
<div style="left:84px;top:407px;width:21px;height:6px;box-sizing:border-box;border:1px solid;border-color:#0c4c0c #0c4c0c #0c4c0c #0c4c0c;background:#1e8a1e;"></div>
<div style="left:69px;top:441px;width:48px;height:15px;box-sizing:border-box;border:1px solid;border-color:#404040 #ffffff #ffffff #404040;background:#ffffff;"></div>
<div style="left:72.00px;top:443.50px;font-family:'Liberation Sans', sans-serif;font-size:10px;font-weight:normal;color:#000;line-height:1;white-space:pre;">80</div>
<div style="left:102px;top:442px;width:15px;height:7px;box-sizing:border-box;border:1px solid;border-color:#ffffff #404040 #404040 #ffffff;background:#d4d0c8;"></div>
<div style="left:102px;top:449px;width:15px;height:7px;box-sizing:border-box;border:1px solid;border-color:#ffffff #404040 #404040 #ffffff;background:#d4d0c8;"></div>
<div style="left:109px;top:445px;width:1px;height:1px;background:#000;"></div>
<div style="left:108px;top:446px;width:3px;height:1px;background:#000;"></div>
<div style="left:108px;top:451px;width:3px;height:1px;background:#000;"></div>
<div style="left:109px;top:452px;width:1px;height:1px;background:#000;"></div>
<div style="left:69px;top:462px;width:48px;height:15px;box-sizing:border-box;border:1px solid;border-color:#404040 #ffffff #ffffff #404040;background:#ffffff;"></div>
<div style="left:72.00px;top:464.50px;font-family:'Liberation Sans', sans-serif;font-size:10px;font-weight:normal;color:#000;line-height:1;white-space:pre;">9</div>
<div style="left:102px;top:463px;width:15px;height:7px;box-sizing:border-box;border:1px solid;border-color:#ffffff #404040 #404040 #ffffff;background:#d4d0c8;"></div>
<div style="left:102px;top:470px;width:15px;height:7px;box-sizing:border-box;border:1px solid;border-color:#ffffff #404040 #404040 #ffffff;background:#d4d0c8;"></div>
<div style="left:109px;top:466px;width:1px;height:1px;background:#000;"></div>
<div style="left:108px;top:467px;width:3px;height:1px;background:#000;"></div>
<div style="left:108px;top:472px;width:3px;height:1px;background:#000;"></div>
<div style="left:109px;top:473px;width:1px;height:1px;background:#000;"></div>
<div style="left:69px;top:483px;width:15px;height:15px;box-sizing:border-box;border:1px solid;border-color:#ffffff #000000 #000000 #ffffff;background:#d4d0c8;"></div>
<div style="left:70px;top:484px;width:13px;height:13px;box-sizing:border-box;border:1px solid;border-color:#d4d0c8 #808080 #808080 #d4d0c8;"></div>
<svg style="left:69px;top:483px" width="15" height="15" viewBox="0 0 15 15"><path d="M4.5 4.5 H7.5 L10.5 10.5" fill="none" stroke="#000" stroke-width="1.1"/></svg>
<div style="left:85px;top:483px;width:15px;height:15px;box-sizing:border-box;border:1px solid;border-color:#000000 #ffffff #ffffff #000000;background:#d4d0c8;"></div>
<div style="left:86px;top:484px;width:13px;height:13px;box-sizing:border-box;border:1px solid;border-color:#808080 #d4d0c8 #d4d0c8 #808080;"></div>
<div style="left:88px;top:486px;width:10px;height:10px;background:#a4d850;"></div>
<svg style="left:85px;top:483px" width="15" height="15" viewBox="0 0 15 15"><path d="M5.3 10.5 C5.3 5.5 6.3 4.5 7.8 4.5 C9.3 4.5 10.3 5.5 10.3 10.5" fill="none" stroke="#000" stroke-width="1.3"/></svg>
<div style="left:101px;top:483px;width:15px;height:15px;box-sizing:border-box;border:1px solid;border-color:#ffffff #000000 #000000 #ffffff;background:#d4d0c8;"></div>
<div style="left:102px;top:484px;width:13px;height:13px;box-sizing:border-box;border:1px solid;border-color:#d4d0c8 #808080 #808080 #d4d0c8;"></div>
<svg style="left:101px;top:483px" width="15" height="15" viewBox="0 0 15 15"><path d="M4.5 10.5 L7.5 4.5 H10.5" fill="none" stroke="#000" stroke-width="1.1"/></svg>
<div style="left:122px;top:322px;width:57px;height:183px;box-sizing:border-box;border:1px solid;border-color:#ffffff #808080 #808080 #ffffff;"></div>
<div style="left:124px;top:325px;width:52px;height:112px;box-sizing:border-box;border:1px solid;border-color:#ffffff #ffffff #ffffff #ffffff;"></div>
<div style="left:125px;top:326px;width:50px;height:110px;box-sizing:border-box;border:1px solid;border-color:#202020 #202020 #202020 #202020;"></div>
<div style="left:126px;top:327px;width:48px;height:108px;box-sizing:border-box;border:1px solid;border-color:#ffffff #808080 #808080 #ffffff;"></div>
<div style="left:129px;top:332px;width:40px;height:16px;box-sizing:border-box;border:1px solid;border-color:#707070 #ffffff #ffffff #707070;"></div>
<div style="left:130px;top:333px;width:38px;height:14px;background:#000;"></div>
<div style="left:148.21px;top:334.85px;font-family:'Liberation Sans', sans-serif;font-size:11px;font-weight:normal;color:#48e448;line-height:1;white-space:pre;letter-spacing:0.2px;-webkit-text-stroke:0.3px;">0,0</div>
<svg style="left:136px;top:355px" width="29" height="72" shape-rendering="crispEdges"><rect x="0" y="2" width="9" height="2"/><rect x="20" y="2" width="9" height="2"/><rect x="5" y="5" width="4" height="1" fill="#202020"/><rect x="20" y="5" width="4" height="1" fill="#202020"/><rect x="5" y="7" width="4" height="1" fill="#202020"/><rect x="20" y="7" width="4" height="1" fill="#202020"/><rect x="5" y="9" width="4" height="1" fill="#202020"/><rect x="20" y="9" width="4" height="1" fill="#202020"/><rect x="5" y="12" width="4" height="1" fill="#202020"/><rect x="20" y="12" width="4" height="1" fill="#202020"/><rect x="0" y="14" width="9" height="1"/><rect x="20" y="14" width="9" height="1"/><rect x="5" y="16" width="4" height="1" fill="#202020"/><rect x="20" y="16" width="4" height="1" fill="#202020"/><rect x="5" y="18" width="4" height="1" fill="#202020"/><rect x="20" y="18" width="4" height="1" fill="#202020"/><rect x="5" y="21" width="4" height="1" fill="#202020"/><rect x="20" y="21" width="4" height="1" fill="#202020"/><rect x="5" y="23" width="4" height="1" fill="#202020"/><rect x="20" y="23" width="4" height="1" fill="#202020"/><rect x="0" y="25" width="9" height="1"/><rect x="20" y="25" width="9" height="1"/><rect x="5" y="27" width="4" height="1" fill="#202020"/><rect x="20" y="27" width="4" height="1" fill="#202020"/><rect x="5" y="30" width="4" height="1" fill="#202020"/><rect x="20" y="30" width="4" height="1" fill="#202020"/><rect x="5" y="32" width="4" height="1" fill="#202020"/><rect x="20" y="32" width="4" height="1" fill="#202020"/><rect x="5" y="34" width="4" height="1" fill="#202020"/><rect x="20" y="34" width="4" height="1" fill="#202020"/><rect x="0" y="36" width="9" height="1"/><rect x="20" y="36" width="9" height="1"/><rect x="5" y="38" width="4" height="1" fill="#202020"/><rect x="20" y="38" width="4" height="1" fill="#202020"/><rect x="5" y="41" width="4" height="1" fill="#202020"/><rect x="20" y="41" width="4" height="1" fill="#202020"/><rect x="5" y="43" width="4" height="1" fill="#202020"/><rect x="20" y="43" width="4" height="1" fill="#202020"/><rect x="5" y="45" width="4" height="1" fill="#202020"/><rect x="20" y="45" width="4" height="1" fill="#202020"/><rect x="0" y="47" width="9" height="1"/><rect x="20" y="47" width="9" height="1"/><rect x="5" y="50" width="4" height="1" fill="#202020"/><rect x="20" y="50" width="4" height="1" fill="#202020"/><rect x="5" y="52" width="4" height="1" fill="#202020"/><rect x="20" y="52" width="4" height="1" fill="#202020"/><rect x="5" y="54" width="4" height="1" fill="#202020"/><rect x="20" y="54" width="4" height="1" fill="#202020"/><rect x="5" y="56" width="4" height="1" fill="#202020"/><rect x="20" y="56" width="4" height="1" fill="#202020"/><rect x="0" y="59" width="9" height="1"/><rect x="20" y="59" width="9" height="1"/><rect x="5" y="61" width="4" height="1" fill="#202020"/><rect x="20" y="61" width="4" height="1" fill="#202020"/><rect x="5" y="63" width="4" height="1" fill="#202020"/><rect x="20" y="63" width="4" height="1" fill="#202020"/><rect x="5" y="65" width="4" height="1" fill="#202020"/><rect x="20" y="65" width="4" height="1" fill="#202020"/><rect x="5" y="68" width="4" height="1" fill="#202020"/><rect x="20" y="68" width="4" height="1" fill="#202020"/><rect x="0" y="69" width="9" height="2"/><rect x="20" y="69" width="9" height="2"/></svg>
<div style="left:148px;top:357px;width:4px;height:69px;background:#808080;"></div>
<div style="left:149px;top:358px;width:2px;height:67px;background:#585858;"></div>
<div style="left:152px;top:358px;width:1px;height:68px;background:#f0f0f0;"></div>
<div style="left:137px;top:390px;width:2px;height:3px;background:#000;"></div>
<div style="left:164px;top:390px;width:2px;height:3px;background:#000;"></div>
<div style="left:139px;top:387px;width:25px;height:10px;box-sizing:border-box;border:1px solid;border-color:#404040 #202020 #202020 #404040;background:#e8e8e0;"></div>
<div style="left:141px;top:389px;width:21px;height:6px;box-sizing:border-box;border:1px solid;border-color:#0c4c0c #0c4c0c #0c4c0c #0c4c0c;background:#1e8a1e;"></div>
<div style="left:126px;top:441px;width:48px;height:15px;box-sizing:border-box;border:1px solid;border-color:#404040 #ffffff #ffffff #404040;background:#ffffff;"></div>
<div style="left:129.00px;top:443.50px;font-family:'Liberation Sans', sans-serif;font-size:10px;font-weight:normal;color:#000;line-height:1;white-space:pre;">160</div>
<div style="left:159px;top:442px;width:15px;height:7px;box-sizing:border-box;border:1px solid;border-color:#ffffff #404040 #404040 #ffffff;background:#d4d0c8;"></div>
<div style="left:159px;top:449px;width:15px;height:7px;box-sizing:border-box;border:1px solid;border-color:#ffffff #404040 #404040 #ffffff;background:#d4d0c8;"></div>
<div style="left:166px;top:445px;width:1px;height:1px;background:#000;"></div>
<div style="left:165px;top:446px;width:3px;height:1px;background:#000;"></div>
<div style="left:165px;top:451px;width:3px;height:1px;background:#000;"></div>
<div style="left:166px;top:452px;width:1px;height:1px;background:#000;"></div>
<div style="left:126px;top:462px;width:48px;height:15px;box-sizing:border-box;border:1px solid;border-color:#404040 #ffffff #ffffff #404040;background:#ffffff;"></div>
<div style="left:129.00px;top:464.50px;font-family:'Liberation Sans', sans-serif;font-size:10px;font-weight:normal;color:#000;line-height:1;white-space:pre;">1</div>
<div style="left:159px;top:463px;width:15px;height:7px;box-sizing:border-box;border:1px solid;border-color:#ffffff #404040 #404040 #ffffff;background:#d4d0c8;"></div>
<div style="left:159px;top:470px;width:15px;height:7px;box-sizing:border-box;border:1px solid;border-color:#ffffff #404040 #404040 #ffffff;background:#d4d0c8;"></div>
<div style="left:166px;top:466px;width:1px;height:1px;background:#000;"></div>
<div style="left:165px;top:467px;width:3px;height:1px;background:#000;"></div>
<div style="left:165px;top:472px;width:3px;height:1px;background:#000;"></div>
<div style="left:166px;top:473px;width:1px;height:1px;background:#000;"></div>
<div style="left:126px;top:483px;width:15px;height:15px;box-sizing:border-box;border:1px solid;border-color:#ffffff #000000 #000000 #ffffff;background:#d4d0c8;"></div>
<div style="left:127px;top:484px;width:13px;height:13px;box-sizing:border-box;border:1px solid;border-color:#d4d0c8 #808080 #808080 #d4d0c8;"></div>
<svg style="left:126px;top:483px" width="15" height="15" viewBox="0 0 15 15"><path d="M4.5 4.5 H7.5 L10.5 10.5" fill="none" stroke="#000" stroke-width="1.1"/></svg>
<div style="left:142px;top:483px;width:15px;height:15px;box-sizing:border-box;border:1px solid;border-color:#000000 #ffffff #ffffff #000000;background:#d4d0c8;"></div>
<div style="left:143px;top:484px;width:13px;height:13px;box-sizing:border-box;border:1px solid;border-color:#808080 #d4d0c8 #d4d0c8 #808080;"></div>
<div style="left:145px;top:486px;width:10px;height:10px;background:#a4d850;"></div>
<svg style="left:142px;top:483px" width="15" height="15" viewBox="0 0 15 15"><path d="M5.3 10.5 C5.3 5.5 6.3 4.5 7.8 4.5 C9.3 4.5 10.3 5.5 10.3 10.5" fill="none" stroke="#000" stroke-width="1.3"/></svg>
<div style="left:158px;top:483px;width:15px;height:15px;box-sizing:border-box;border:1px solid;border-color:#ffffff #000000 #000000 #ffffff;background:#d4d0c8;"></div>
<div style="left:159px;top:484px;width:13px;height:13px;box-sizing:border-box;border:1px solid;border-color:#d4d0c8 #808080 #808080 #d4d0c8;"></div>
<svg style="left:158px;top:483px" width="15" height="15" viewBox="0 0 15 15"><path d="M4.5 10.5 L7.5 4.5 H10.5" fill="none" stroke="#000" stroke-width="1.1"/></svg>
<div style="left:179px;top:322px;width:57px;height:183px;box-sizing:border-box;border:1px solid;border-color:#ffffff #808080 #808080 #ffffff;"></div>
<div style="left:181px;top:325px;width:52px;height:112px;box-sizing:border-box;border:1px solid;border-color:#ffffff #ffffff #ffffff #ffffff;"></div>
<div style="left:182px;top:326px;width:50px;height:110px;box-sizing:border-box;border:1px solid;border-color:#202020 #202020 #202020 #202020;"></div>
<div style="left:183px;top:327px;width:48px;height:108px;box-sizing:border-box;border:1px solid;border-color:#ffffff #808080 #808080 #ffffff;"></div>
<div style="left:186px;top:332px;width:40px;height:16px;box-sizing:border-box;border:1px solid;border-color:#707070 #ffffff #ffffff #707070;"></div>
<div style="left:187px;top:333px;width:38px;height:14px;background:#000;"></div>
<div style="left:205.37px;top:334.85px;font-family:'Liberation Sans', sans-serif;font-size:11px;font-weight:normal;color:#48e448;line-height:1;white-space:pre;letter-spacing:0.2px;-webkit-text-stroke:0.3px;">4,0</div>
<svg style="left:193px;top:355px" width="29" height="72" shape-rendering="crispEdges"><rect x="0" y="2" width="9" height="2"/><rect x="20" y="2" width="9" height="2"/><rect x="5" y="5" width="4" height="1" fill="#202020"/><rect x="20" y="5" width="4" height="1" fill="#202020"/><rect x="5" y="7" width="4" height="1" fill="#202020"/><rect x="20" y="7" width="4" height="1" fill="#202020"/><rect x="5" y="9" width="4" height="1" fill="#202020"/><rect x="20" y="9" width="4" height="1" fill="#202020"/><rect x="5" y="12" width="4" height="1" fill="#202020"/><rect x="20" y="12" width="4" height="1" fill="#202020"/><rect x="0" y="14" width="9" height="1"/><rect x="20" y="14" width="9" height="1"/><rect x="5" y="16" width="4" height="1" fill="#202020"/><rect x="20" y="16" width="4" height="1" fill="#202020"/><rect x="5" y="18" width="4" height="1" fill="#202020"/><rect x="20" y="18" width="4" height="1" fill="#202020"/><rect x="5" y="21" width="4" height="1" fill="#202020"/><rect x="20" y="21" width="4" height="1" fill="#202020"/><rect x="5" y="23" width="4" height="1" fill="#202020"/><rect x="20" y="23" width="4" height="1" fill="#202020"/><rect x="0" y="25" width="9" height="1"/><rect x="20" y="25" width="9" height="1"/><rect x="5" y="27" width="4" height="1" fill="#202020"/><rect x="20" y="27" width="4" height="1" fill="#202020"/><rect x="5" y="30" width="4" height="1" fill="#202020"/><rect x="20" y="30" width="4" height="1" fill="#202020"/><rect x="5" y="32" width="4" height="1" fill="#202020"/><rect x="20" y="32" width="4" height="1" fill="#202020"/><rect x="5" y="34" width="4" height="1" fill="#202020"/><rect x="20" y="34" width="4" height="1" fill="#202020"/><rect x="0" y="36" width="9" height="1"/><rect x="20" y="36" width="9" height="1"/><rect x="5" y="38" width="4" height="1" fill="#202020"/><rect x="20" y="38" width="4" height="1" fill="#202020"/><rect x="5" y="41" width="4" height="1" fill="#202020"/><rect x="20" y="41" width="4" height="1" fill="#202020"/><rect x="5" y="43" width="4" height="1" fill="#202020"/><rect x="20" y="43" width="4" height="1" fill="#202020"/><rect x="5" y="45" width="4" height="1" fill="#202020"/><rect x="20" y="45" width="4" height="1" fill="#202020"/><rect x="0" y="47" width="9" height="1"/><rect x="20" y="47" width="9" height="1"/><rect x="5" y="50" width="4" height="1" fill="#202020"/><rect x="20" y="50" width="4" height="1" fill="#202020"/><rect x="5" y="52" width="4" height="1" fill="#202020"/><rect x="20" y="52" width="4" height="1" fill="#202020"/><rect x="5" y="54" width="4" height="1" fill="#202020"/><rect x="20" y="54" width="4" height="1" fill="#202020"/><rect x="5" y="56" width="4" height="1" fill="#202020"/><rect x="20" y="56" width="4" height="1" fill="#202020"/><rect x="0" y="59" width="9" height="1"/><rect x="20" y="59" width="9" height="1"/><rect x="5" y="61" width="4" height="1" fill="#202020"/><rect x="20" y="61" width="4" height="1" fill="#202020"/><rect x="5" y="63" width="4" height="1" fill="#202020"/><rect x="20" y="63" width="4" height="1" fill="#202020"/><rect x="5" y="65" width="4" height="1" fill="#202020"/><rect x="20" y="65" width="4" height="1" fill="#202020"/><rect x="5" y="68" width="4" height="1" fill="#202020"/><rect x="20" y="68" width="4" height="1" fill="#202020"/><rect x="0" y="69" width="9" height="2"/><rect x="20" y="69" width="9" height="2"/></svg>
<div style="left:205px;top:357px;width:4px;height:69px;background:#808080;"></div>
<div style="left:206px;top:358px;width:2px;height:67px;background:#585858;"></div>
<div style="left:209px;top:358px;width:1px;height:68px;background:#f0f0f0;"></div>
<div style="left:194px;top:381px;width:2px;height:3px;background:#000;"></div>
<div style="left:221px;top:381px;width:2px;height:3px;background:#000;"></div>
<div style="left:196px;top:378px;width:25px;height:10px;box-sizing:border-box;border:1px solid;border-color:#404040 #202020 #202020 #404040;background:#e8e8e0;"></div>
<div style="left:198px;top:380px;width:21px;height:6px;box-sizing:border-box;border:1px solid;border-color:#0c4c0c #0c4c0c #0c4c0c #0c4c0c;background:#1e8a1e;"></div>
<div style="left:183px;top:441px;width:48px;height:15px;box-sizing:border-box;border:1px solid;border-color:#404040 #ffffff #ffffff #404040;background:#ffffff;"></div>
<div style="left:186.00px;top:443.50px;font-family:'Liberation Sans', sans-serif;font-size:10px;font-weight:normal;color:#000;line-height:1;white-space:pre;">315</div>
<div style="left:216px;top:442px;width:15px;height:7px;box-sizing:border-box;border:1px solid;border-color:#ffffff #404040 #404040 #ffffff;background:#d4d0c8;"></div>
<div style="left:216px;top:449px;width:15px;height:7px;box-sizing:border-box;border:1px solid;border-color:#ffffff #404040 #404040 #ffffff;background:#d4d0c8;"></div>
<div style="left:223px;top:445px;width:1px;height:1px;background:#000;"></div>
<div style="left:222px;top:446px;width:3px;height:1px;background:#000;"></div>
<div style="left:222px;top:451px;width:3px;height:1px;background:#000;"></div>
<div style="left:223px;top:452px;width:1px;height:1px;background:#000;"></div>
<div style="left:183px;top:462px;width:48px;height:15px;box-sizing:border-box;border:1px solid;border-color:#404040 #ffffff #ffffff #404040;background:#ffffff;"></div>
<div style="left:186.00px;top:464.50px;font-family:'Liberation Sans', sans-serif;font-size:10px;font-weight:normal;color:#000;line-height:1;white-space:pre;">1</div>
<div style="left:216px;top:463px;width:15px;height:7px;box-sizing:border-box;border:1px solid;border-color:#ffffff #404040 #404040 #ffffff;background:#d4d0c8;"></div>
<div style="left:216px;top:470px;width:15px;height:7px;box-sizing:border-box;border:1px solid;border-color:#ffffff #404040 #404040 #ffffff;background:#d4d0c8;"></div>
<div style="left:223px;top:466px;width:1px;height:1px;background:#000;"></div>
<div style="left:222px;top:467px;width:3px;height:1px;background:#000;"></div>
<div style="left:222px;top:472px;width:3px;height:1px;background:#000;"></div>
<div style="left:223px;top:473px;width:1px;height:1px;background:#000;"></div>
<div style="left:183px;top:483px;width:15px;height:15px;box-sizing:border-box;border:1px solid;border-color:#ffffff #000000 #000000 #ffffff;background:#d4d0c8;"></div>
<div style="left:184px;top:484px;width:13px;height:13px;box-sizing:border-box;border:1px solid;border-color:#d4d0c8 #808080 #808080 #d4d0c8;"></div>
<svg style="left:183px;top:483px" width="15" height="15" viewBox="0 0 15 15"><path d="M4.5 4.5 H7.5 L10.5 10.5" fill="none" stroke="#000" stroke-width="1.1"/></svg>
<div style="left:199px;top:483px;width:15px;height:15px;box-sizing:border-box;border:1px solid;border-color:#000000 #ffffff #ffffff #000000;background:#d4d0c8;"></div>
<div style="left:200px;top:484px;width:13px;height:13px;box-sizing:border-box;border:1px solid;border-color:#808080 #d4d0c8 #d4d0c8 #808080;"></div>
<div style="left:202px;top:486px;width:10px;height:10px;background:#a4d850;"></div>
<svg style="left:199px;top:483px" width="15" height="15" viewBox="0 0 15 15"><path d="M5.3 10.5 C5.3 5.5 6.3 4.5 7.8 4.5 C9.3 4.5 10.3 5.5 10.3 10.5" fill="none" stroke="#000" stroke-width="1.3"/></svg>
<div style="left:216px;top:483px;width:15px;height:15px;box-sizing:border-box;border:1px solid;border-color:#ffffff #000000 #000000 #ffffff;background:#d4d0c8;"></div>
<div style="left:217px;top:484px;width:13px;height:13px;box-sizing:border-box;border:1px solid;border-color:#d4d0c8 #808080 #808080 #d4d0c8;"></div>
<svg style="left:216px;top:483px" width="15" height="15" viewBox="0 0 15 15"><path d="M4.5 10.5 L7.5 4.5 H10.5" fill="none" stroke="#000" stroke-width="1.1"/></svg>
<div style="left:237px;top:322px;width:57px;height:183px;box-sizing:border-box;border:1px solid;border-color:#ffffff #808080 #808080 #ffffff;"></div>
<div style="left:239px;top:325px;width:52px;height:112px;box-sizing:border-box;border:1px solid;border-color:#ffffff #ffffff #ffffff #ffffff;"></div>
<div style="left:240px;top:326px;width:50px;height:110px;box-sizing:border-box;border:1px solid;border-color:#202020 #202020 #202020 #202020;"></div>
<div style="left:241px;top:327px;width:48px;height:108px;box-sizing:border-box;border:1px solid;border-color:#ffffff #808080 #808080 #ffffff;"></div>
<div style="left:244px;top:332px;width:40px;height:16px;box-sizing:border-box;border:1px solid;border-color:#707070 #ffffff #ffffff #707070;"></div>
<div style="left:245px;top:333px;width:38px;height:14px;background:#000;"></div>
<div style="left:262.53px;top:334.85px;font-family:'Liberation Sans', sans-serif;font-size:11px;font-weight:normal;color:#48e448;line-height:1;white-space:pre;letter-spacing:0.2px;-webkit-text-stroke:0.3px;">8,0</div>
<svg style="left:251px;top:355px" width="29" height="72" shape-rendering="crispEdges"><rect x="0" y="2" width="9" height="2"/><rect x="20" y="2" width="9" height="2"/><rect x="5" y="5" width="4" height="1" fill="#202020"/><rect x="20" y="5" width="4" height="1" fill="#202020"/><rect x="5" y="7" width="4" height="1" fill="#202020"/><rect x="20" y="7" width="4" height="1" fill="#202020"/><rect x="5" y="9" width="4" height="1" fill="#202020"/><rect x="20" y="9" width="4" height="1" fill="#202020"/><rect x="5" y="12" width="4" height="1" fill="#202020"/><rect x="20" y="12" width="4" height="1" fill="#202020"/><rect x="0" y="14" width="9" height="1"/><rect x="20" y="14" width="9" height="1"/><rect x="5" y="16" width="4" height="1" fill="#202020"/><rect x="20" y="16" width="4" height="1" fill="#202020"/><rect x="5" y="18" width="4" height="1" fill="#202020"/><rect x="20" y="18" width="4" height="1" fill="#202020"/><rect x="5" y="21" width="4" height="1" fill="#202020"/><rect x="20" y="21" width="4" height="1" fill="#202020"/><rect x="5" y="23" width="4" height="1" fill="#202020"/><rect x="20" y="23" width="4" height="1" fill="#202020"/><rect x="0" y="25" width="9" height="1"/><rect x="20" y="25" width="9" height="1"/><rect x="5" y="27" width="4" height="1" fill="#202020"/><rect x="20" y="27" width="4" height="1" fill="#202020"/><rect x="5" y="30" width="4" height="1" fill="#202020"/><rect x="20" y="30" width="4" height="1" fill="#202020"/><rect x="5" y="32" width="4" height="1" fill="#202020"/><rect x="20" y="32" width="4" height="1" fill="#202020"/><rect x="5" y="34" width="4" height="1" fill="#202020"/><rect x="20" y="34" width="4" height="1" fill="#202020"/><rect x="0" y="36" width="9" height="1"/><rect x="20" y="36" width="9" height="1"/><rect x="5" y="38" width="4" height="1" fill="#202020"/><rect x="20" y="38" width="4" height="1" fill="#202020"/><rect x="5" y="41" width="4" height="1" fill="#202020"/><rect x="20" y="41" width="4" height="1" fill="#202020"/><rect x="5" y="43" width="4" height="1" fill="#202020"/><rect x="20" y="43" width="4" height="1" fill="#202020"/><rect x="5" y="45" width="4" height="1" fill="#202020"/><rect x="20" y="45" width="4" height="1" fill="#202020"/><rect x="0" y="47" width="9" height="1"/><rect x="20" y="47" width="9" height="1"/><rect x="5" y="50" width="4" height="1" fill="#202020"/><rect x="20" y="50" width="4" height="1" fill="#202020"/><rect x="5" y="52" width="4" height="1" fill="#202020"/><rect x="20" y="52" width="4" height="1" fill="#202020"/><rect x="5" y="54" width="4" height="1" fill="#202020"/><rect x="20" y="54" width="4" height="1" fill="#202020"/><rect x="5" y="56" width="4" height="1" fill="#202020"/><rect x="20" y="56" width="4" height="1" fill="#202020"/><rect x="0" y="59" width="9" height="1"/><rect x="20" y="59" width="9" height="1"/><rect x="5" y="61" width="4" height="1" fill="#202020"/><rect x="20" y="61" width="4" height="1" fill="#202020"/><rect x="5" y="63" width="4" height="1" fill="#202020"/><rect x="20" y="63" width="4" height="1" fill="#202020"/><rect x="5" y="65" width="4" height="1" fill="#202020"/><rect x="20" y="65" width="4" height="1" fill="#202020"/><rect x="5" y="68" width="4" height="1" fill="#202020"/><rect x="20" y="68" width="4" height="1" fill="#202020"/><rect x="0" y="69" width="9" height="2"/><rect x="20" y="69" width="9" height="2"/></svg>
<div style="left:263px;top:357px;width:4px;height:69px;background:#808080;"></div>
<div style="left:264px;top:358px;width:2px;height:67px;background:#585858;"></div>
<div style="left:267px;top:358px;width:1px;height:68px;background:#f0f0f0;"></div>
<div style="left:251px;top:372px;width:2px;height:3px;background:#000;"></div>
<div style="left:278px;top:372px;width:2px;height:3px;background:#000;"></div>
<div style="left:253px;top:369px;width:25px;height:10px;box-sizing:border-box;border:1px solid;border-color:#404040 #202020 #202020 #404040;background:#e8e8e0;"></div>
<div style="left:255px;top:371px;width:21px;height:6px;box-sizing:border-box;border:1px solid;border-color:#0c4c0c #0c4c0c #0c4c0c #0c4c0c;background:#1e8a1e;"></div>
<div style="left:241px;top:441px;width:48px;height:15px;box-sizing:border-box;border:1px solid;border-color:#404040 #ffffff #ffffff #404040;background:#ffffff;"></div>
<div style="left:244.00px;top:443.50px;font-family:'Liberation Sans', sans-serif;font-size:10px;font-weight:normal;color:#000;line-height:1;white-space:pre;">630</div>
<div style="left:274px;top:442px;width:15px;height:7px;box-sizing:border-box;border:1px solid;border-color:#ffffff #404040 #404040 #ffffff;background:#d4d0c8;"></div>
<div style="left:274px;top:449px;width:15px;height:7px;box-sizing:border-box;border:1px solid;border-color:#ffffff #404040 #404040 #ffffff;background:#d4d0c8;"></div>
<div style="left:281px;top:445px;width:1px;height:1px;background:#000;"></div>
<div style="left:280px;top:446px;width:3px;height:1px;background:#000;"></div>
<div style="left:280px;top:451px;width:3px;height:1px;background:#000;"></div>
<div style="left:281px;top:452px;width:1px;height:1px;background:#000;"></div>
<div style="left:241px;top:462px;width:48px;height:15px;box-sizing:border-box;border:1px solid;border-color:#404040 #ffffff #ffffff #404040;background:#ffffff;"></div>
<div style="left:244.00px;top:464.50px;font-family:'Liberation Sans', sans-serif;font-size:10px;font-weight:normal;color:#000;line-height:1;white-space:pre;">10</div>
<div style="left:274px;top:463px;width:15px;height:7px;box-sizing:border-box;border:1px solid;border-color:#ffffff #404040 #404040 #ffffff;background:#d4d0c8;"></div>
<div style="left:274px;top:470px;width:15px;height:7px;box-sizing:border-box;border:1px solid;border-color:#ffffff #404040 #404040 #ffffff;background:#d4d0c8;"></div>
<div style="left:281px;top:466px;width:1px;height:1px;background:#000;"></div>
<div style="left:280px;top:467px;width:3px;height:1px;background:#000;"></div>
<div style="left:280px;top:472px;width:3px;height:1px;background:#000;"></div>
<div style="left:281px;top:473px;width:1px;height:1px;background:#000;"></div>
<div style="left:240px;top:483px;width:15px;height:15px;box-sizing:border-box;border:1px solid;border-color:#ffffff #000000 #000000 #ffffff;background:#d4d0c8;"></div>
<div style="left:241px;top:484px;width:13px;height:13px;box-sizing:border-box;border:1px solid;border-color:#d4d0c8 #808080 #808080 #d4d0c8;"></div>
<svg style="left:240px;top:483px" width="15" height="15" viewBox="0 0 15 15"><path d="M4.5 4.5 H7.5 L10.5 10.5" fill="none" stroke="#000" stroke-width="1.1"/></svg>
<div style="left:257px;top:483px;width:15px;height:15px;box-sizing:border-box;border:1px solid;border-color:#000000 #ffffff #ffffff #000000;background:#d4d0c8;"></div>
<div style="left:258px;top:484px;width:13px;height:13px;box-sizing:border-box;border:1px solid;border-color:#808080 #d4d0c8 #d4d0c8 #808080;"></div>
<div style="left:260px;top:486px;width:10px;height:10px;background:#a4d850;"></div>
<svg style="left:257px;top:483px" width="15" height="15" viewBox="0 0 15 15"><path d="M5.3 10.5 C5.3 5.5 6.3 4.5 7.8 4.5 C9.3 4.5 10.3 5.5 10.3 10.5" fill="none" stroke="#000" stroke-width="1.3"/></svg>
<div style="left:273px;top:483px;width:15px;height:15px;box-sizing:border-box;border:1px solid;border-color:#ffffff #000000 #000000 #ffffff;background:#d4d0c8;"></div>
<div style="left:274px;top:484px;width:13px;height:13px;box-sizing:border-box;border:1px solid;border-color:#d4d0c8 #808080 #808080 #d4d0c8;"></div>
<svg style="left:273px;top:483px" width="15" height="15" viewBox="0 0 15 15"><path d="M4.5 10.5 L7.5 4.5 H10.5" fill="none" stroke="#000" stroke-width="1.1"/></svg>
<div style="left:294px;top:322px;width:57px;height:183px;box-sizing:border-box;border:1px solid;border-color:#ffffff #808080 #808080 #ffffff;"></div>
<div style="left:296px;top:325px;width:52px;height:112px;box-sizing:border-box;border:1px solid;border-color:#ffffff #ffffff #ffffff #ffffff;"></div>
<div style="left:297px;top:326px;width:50px;height:110px;box-sizing:border-box;border:1px solid;border-color:#202020 #202020 #202020 #202020;"></div>
<div style="left:298px;top:327px;width:48px;height:108px;box-sizing:border-box;border:1px solid;border-color:#ffffff #808080 #808080 #ffffff;"></div>
<div style="left:301px;top:332px;width:40px;height:16px;box-sizing:border-box;border:1px solid;border-color:#707070 #ffffff #ffffff #707070;"></div>
<div style="left:302px;top:333px;width:38px;height:14px;background:#000;"></div>
<div style="left:315.83px;top:334.85px;font-family:'Liberation Sans', sans-serif;font-size:11px;font-weight:normal;color:#48e448;line-height:1;white-space:pre;letter-spacing:0.2px;-webkit-text-stroke:0.3px;"><span style="color:#e8e8e8">-</span>4,5</div>
<svg style="left:308px;top:355px" width="29" height="72" shape-rendering="crispEdges"><rect x="0" y="2" width="9" height="2"/><rect x="20" y="2" width="9" height="2"/><rect x="5" y="5" width="4" height="1" fill="#202020"/><rect x="20" y="5" width="4" height="1" fill="#202020"/><rect x="5" y="7" width="4" height="1" fill="#202020"/><rect x="20" y="7" width="4" height="1" fill="#202020"/><rect x="5" y="9" width="4" height="1" fill="#202020"/><rect x="20" y="9" width="4" height="1" fill="#202020"/><rect x="5" y="12" width="4" height="1" fill="#202020"/><rect x="20" y="12" width="4" height="1" fill="#202020"/><rect x="0" y="14" width="9" height="1"/><rect x="20" y="14" width="9" height="1"/><rect x="5" y="16" width="4" height="1" fill="#202020"/><rect x="20" y="16" width="4" height="1" fill="#202020"/><rect x="5" y="18" width="4" height="1" fill="#202020"/><rect x="20" y="18" width="4" height="1" fill="#202020"/><rect x="5" y="21" width="4" height="1" fill="#202020"/><rect x="20" y="21" width="4" height="1" fill="#202020"/><rect x="5" y="23" width="4" height="1" fill="#202020"/><rect x="20" y="23" width="4" height="1" fill="#202020"/><rect x="0" y="25" width="9" height="1"/><rect x="20" y="25" width="9" height="1"/><rect x="5" y="27" width="4" height="1" fill="#202020"/><rect x="20" y="27" width="4" height="1" fill="#202020"/><rect x="5" y="30" width="4" height="1" fill="#202020"/><rect x="20" y="30" width="4" height="1" fill="#202020"/><rect x="5" y="32" width="4" height="1" fill="#202020"/><rect x="20" y="32" width="4" height="1" fill="#202020"/><rect x="5" y="34" width="4" height="1" fill="#202020"/><rect x="20" y="34" width="4" height="1" fill="#202020"/><rect x="0" y="36" width="9" height="1"/><rect x="20" y="36" width="9" height="1"/><rect x="5" y="38" width="4" height="1" fill="#202020"/><rect x="20" y="38" width="4" height="1" fill="#202020"/><rect x="5" y="41" width="4" height="1" fill="#202020"/><rect x="20" y="41" width="4" height="1" fill="#202020"/><rect x="5" y="43" width="4" height="1" fill="#202020"/><rect x="20" y="43" width="4" height="1" fill="#202020"/><rect x="5" y="45" width="4" height="1" fill="#202020"/><rect x="20" y="45" width="4" height="1" fill="#202020"/><rect x="0" y="47" width="9" height="1"/><rect x="20" y="47" width="9" height="1"/><rect x="5" y="50" width="4" height="1" fill="#202020"/><rect x="20" y="50" width="4" height="1" fill="#202020"/><rect x="5" y="52" width="4" height="1" fill="#202020"/><rect x="20" y="52" width="4" height="1" fill="#202020"/><rect x="5" y="54" width="4" height="1" fill="#202020"/><rect x="20" y="54" width="4" height="1" fill="#202020"/><rect x="5" y="56" width="4" height="1" fill="#202020"/><rect x="20" y="56" width="4" height="1" fill="#202020"/><rect x="0" y="59" width="9" height="1"/><rect x="20" y="59" width="9" height="1"/><rect x="5" y="61" width="4" height="1" fill="#202020"/><rect x="20" y="61" width="4" height="1" fill="#202020"/><rect x="5" y="63" width="4" height="1" fill="#202020"/><rect x="20" y="63" width="4" height="1" fill="#202020"/><rect x="5" y="65" width="4" height="1" fill="#202020"/><rect x="20" y="65" width="4" height="1" fill="#202020"/><rect x="5" y="68" width="4" height="1" fill="#202020"/><rect x="20" y="68" width="4" height="1" fill="#202020"/><rect x="0" y="69" width="9" height="2"/><rect x="20" y="69" width="9" height="2"/></svg>
<div style="left:320px;top:357px;width:4px;height:69px;background:#808080;"></div>
<div style="left:321px;top:358px;width:2px;height:67px;background:#585858;"></div>
<div style="left:324px;top:358px;width:1px;height:68px;background:#f0f0f0;"></div>
<div style="left:308px;top:400px;width:2px;height:3px;background:#000;"></div>
<div style="left:335px;top:400px;width:2px;height:3px;background:#000;"></div>
<div style="left:310px;top:397px;width:25px;height:10px;box-sizing:border-box;border:1px solid;border-color:#404040 #202020 #202020 #404040;background:#e8e8e0;"></div>
<div style="left:312px;top:399px;width:21px;height:6px;box-sizing:border-box;border:1px solid;border-color:#0c4c0c #0c4c0c #0c4c0c #0c4c0c;background:#1e8a1e;"></div>
<div style="left:298px;top:441px;width:48px;height:15px;box-sizing:border-box;border:1px solid;border-color:#404040 #ffffff #ffffff #404040;background:#ffffff;"></div>
<div style="left:301.00px;top:443.50px;font-family:'Liberation Sans', sans-serif;font-size:10px;font-weight:normal;color:#000;line-height:1;white-space:pre;">1250</div>
<div style="left:331px;top:442px;width:15px;height:7px;box-sizing:border-box;border:1px solid;border-color:#ffffff #404040 #404040 #ffffff;background:#d4d0c8;"></div>
<div style="left:331px;top:449px;width:15px;height:7px;box-sizing:border-box;border:1px solid;border-color:#ffffff #404040 #404040 #ffffff;background:#d4d0c8;"></div>
<div style="left:338px;top:445px;width:1px;height:1px;background:#000;"></div>
<div style="left:337px;top:446px;width:3px;height:1px;background:#000;"></div>
<div style="left:337px;top:451px;width:3px;height:1px;background:#000;"></div>
<div style="left:338px;top:452px;width:1px;height:1px;background:#000;"></div>
<div style="left:298px;top:462px;width:48px;height:15px;box-sizing:border-box;border:1px solid;border-color:#404040 #ffffff #ffffff #404040;background:#ffffff;"></div>
<div style="left:301.00px;top:464.50px;font-family:'Liberation Sans', sans-serif;font-size:10px;font-weight:normal;color:#000;line-height:1;white-space:pre;">7</div>
<div style="left:331px;top:463px;width:15px;height:7px;box-sizing:border-box;border:1px solid;border-color:#ffffff #404040 #404040 #ffffff;background:#d4d0c8;"></div>
<div style="left:331px;top:470px;width:15px;height:7px;box-sizing:border-box;border:1px solid;border-color:#ffffff #404040 #404040 #ffffff;background:#d4d0c8;"></div>
<div style="left:338px;top:466px;width:1px;height:1px;background:#000;"></div>
<div style="left:337px;top:467px;width:3px;height:1px;background:#000;"></div>
<div style="left:337px;top:472px;width:3px;height:1px;background:#000;"></div>
<div style="left:338px;top:473px;width:1px;height:1px;background:#000;"></div>
<div style="left:297px;top:483px;width:15px;height:15px;box-sizing:border-box;border:1px solid;border-color:#ffffff #000000 #000000 #ffffff;background:#d4d0c8;"></div>
<div style="left:298px;top:484px;width:13px;height:13px;box-sizing:border-box;border:1px solid;border-color:#d4d0c8 #808080 #808080 #d4d0c8;"></div>
<svg style="left:297px;top:483px" width="15" height="15" viewBox="0 0 15 15"><path d="M4.5 4.5 H7.5 L10.5 10.5" fill="none" stroke="#000" stroke-width="1.1"/></svg>
<div style="left:314px;top:483px;width:15px;height:15px;box-sizing:border-box;border:1px solid;border-color:#000000 #ffffff #ffffff #000000;background:#d4d0c8;"></div>
<div style="left:315px;top:484px;width:13px;height:13px;box-sizing:border-box;border:1px solid;border-color:#808080 #d4d0c8 #d4d0c8 #808080;"></div>
<div style="left:317px;top:486px;width:10px;height:10px;background:#a4d850;"></div>
<svg style="left:314px;top:483px" width="15" height="15" viewBox="0 0 15 15"><path d="M5.3 10.5 C5.3 5.5 6.3 4.5 7.8 4.5 C9.3 4.5 10.3 5.5 10.3 10.5" fill="none" stroke="#000" stroke-width="1.3"/></svg>
<div style="left:330px;top:483px;width:15px;height:15px;box-sizing:border-box;border:1px solid;border-color:#ffffff #000000 #000000 #ffffff;background:#d4d0c8;"></div>
<div style="left:331px;top:484px;width:13px;height:13px;box-sizing:border-box;border:1px solid;border-color:#d4d0c8 #808080 #808080 #d4d0c8;"></div>
<svg style="left:330px;top:483px" width="15" height="15" viewBox="0 0 15 15"><path d="M4.5 10.5 L7.5 4.5 H10.5" fill="none" stroke="#000" stroke-width="1.1"/></svg>
<div style="left:351px;top:322px;width:57px;height:183px;box-sizing:border-box;border:1px solid;border-color:#ffffff #808080 #808080 #ffffff;"></div>
<div style="left:353px;top:325px;width:52px;height:112px;box-sizing:border-box;border:1px solid;border-color:#ffffff #ffffff #ffffff #ffffff;"></div>
<div style="left:354px;top:326px;width:50px;height:110px;box-sizing:border-box;border:1px solid;border-color:#202020 #202020 #202020 #202020;"></div>
<div style="left:355px;top:327px;width:48px;height:108px;box-sizing:border-box;border:1px solid;border-color:#ffffff #808080 #808080 #ffffff;"></div>
<div style="left:358px;top:332px;width:40px;height:16px;box-sizing:border-box;border:1px solid;border-color:#707070 #ffffff #ffffff #707070;"></div>
<div style="left:359px;top:333px;width:38px;height:14px;background:#000;"></div>
<div style="left:376.85px;top:334.85px;font-family:'Liberation Sans', sans-serif;font-size:11px;font-weight:normal;color:#48e448;line-height:1;white-space:pre;letter-spacing:0.2px;-webkit-text-stroke:0.3px;">0,0</div>
<svg style="left:365px;top:355px" width="29" height="72" shape-rendering="crispEdges"><rect x="0" y="2" width="9" height="2"/><rect x="20" y="2" width="9" height="2"/><rect x="5" y="5" width="4" height="1" fill="#202020"/><rect x="20" y="5" width="4" height="1" fill="#202020"/><rect x="5" y="7" width="4" height="1" fill="#202020"/><rect x="20" y="7" width="4" height="1" fill="#202020"/><rect x="5" y="9" width="4" height="1" fill="#202020"/><rect x="20" y="9" width="4" height="1" fill="#202020"/><rect x="5" y="12" width="4" height="1" fill="#202020"/><rect x="20" y="12" width="4" height="1" fill="#202020"/><rect x="0" y="14" width="9" height="1"/><rect x="20" y="14" width="9" height="1"/><rect x="5" y="16" width="4" height="1" fill="#202020"/><rect x="20" y="16" width="4" height="1" fill="#202020"/><rect x="5" y="18" width="4" height="1" fill="#202020"/><rect x="20" y="18" width="4" height="1" fill="#202020"/><rect x="5" y="21" width="4" height="1" fill="#202020"/><rect x="20" y="21" width="4" height="1" fill="#202020"/><rect x="5" y="23" width="4" height="1" fill="#202020"/><rect x="20" y="23" width="4" height="1" fill="#202020"/><rect x="0" y="25" width="9" height="1"/><rect x="20" y="25" width="9" height="1"/><rect x="5" y="27" width="4" height="1" fill="#202020"/><rect x="20" y="27" width="4" height="1" fill="#202020"/><rect x="5" y="30" width="4" height="1" fill="#202020"/><rect x="20" y="30" width="4" height="1" fill="#202020"/><rect x="5" y="32" width="4" height="1" fill="#202020"/><rect x="20" y="32" width="4" height="1" fill="#202020"/><rect x="5" y="34" width="4" height="1" fill="#202020"/><rect x="20" y="34" width="4" height="1" fill="#202020"/><rect x="0" y="36" width="9" height="1"/><rect x="20" y="36" width="9" height="1"/><rect x="5" y="38" width="4" height="1" fill="#202020"/><rect x="20" y="38" width="4" height="1" fill="#202020"/><rect x="5" y="41" width="4" height="1" fill="#202020"/><rect x="20" y="41" width="4" height="1" fill="#202020"/><rect x="5" y="43" width="4" height="1" fill="#202020"/><rect x="20" y="43" width="4" height="1" fill="#202020"/><rect x="5" y="45" width="4" height="1" fill="#202020"/><rect x="20" y="45" width="4" height="1" fill="#202020"/><rect x="0" y="47" width="9" height="1"/><rect x="20" y="47" width="9" height="1"/><rect x="5" y="50" width="4" height="1" fill="#202020"/><rect x="20" y="50" width="4" height="1" fill="#202020"/><rect x="5" y="52" width="4" height="1" fill="#202020"/><rect x="20" y="52" width="4" height="1" fill="#202020"/><rect x="5" y="54" width="4" height="1" fill="#202020"/><rect x="20" y="54" width="4" height="1" fill="#202020"/><rect x="5" y="56" width="4" height="1" fill="#202020"/><rect x="20" y="56" width="4" height="1" fill="#202020"/><rect x="0" y="59" width="9" height="1"/><rect x="20" y="59" width="9" height="1"/><rect x="5" y="61" width="4" height="1" fill="#202020"/><rect x="20" y="61" width="4" height="1" fill="#202020"/><rect x="5" y="63" width="4" height="1" fill="#202020"/><rect x="20" y="63" width="4" height="1" fill="#202020"/><rect x="5" y="65" width="4" height="1" fill="#202020"/><rect x="20" y="65" width="4" height="1" fill="#202020"/><rect x="5" y="68" width="4" height="1" fill="#202020"/><rect x="20" y="68" width="4" height="1" fill="#202020"/><rect x="0" y="69" width="9" height="2"/><rect x="20" y="69" width="9" height="2"/></svg>
<div style="left:377px;top:357px;width:4px;height:69px;background:#808080;"></div>
<div style="left:378px;top:358px;width:2px;height:67px;background:#585858;"></div>
<div style="left:381px;top:358px;width:1px;height:68px;background:#f0f0f0;"></div>
<div style="left:365px;top:390px;width:2px;height:3px;background:#000;"></div>
<div style="left:392px;top:390px;width:2px;height:3px;background:#000;"></div>
<div style="left:367px;top:387px;width:25px;height:10px;box-sizing:border-box;border:1px solid;border-color:#404040 #202020 #202020 #404040;background:#e8e8e0;"></div>
<div style="left:369px;top:389px;width:21px;height:6px;box-sizing:border-box;border:1px solid;border-color:#0c4c0c #0c4c0c #0c4c0c #0c4c0c;background:#1e8a1e;"></div>
<div style="left:355px;top:441px;width:48px;height:15px;box-sizing:border-box;border:1px solid;border-color:#404040 #ffffff #ffffff #404040;background:#ffffff;"></div>
<div style="left:358.00px;top:443.50px;font-family:'Liberation Sans', sans-serif;font-size:10px;font-weight:normal;color:#000;line-height:1;white-space:pre;">2500</div>
<div style="left:388px;top:442px;width:15px;height:7px;box-sizing:border-box;border:1px solid;border-color:#ffffff #404040 #404040 #ffffff;background:#d4d0c8;"></div>
<div style="left:388px;top:449px;width:15px;height:7px;box-sizing:border-box;border:1px solid;border-color:#ffffff #404040 #404040 #ffffff;background:#d4d0c8;"></div>
<div style="left:395px;top:445px;width:1px;height:1px;background:#000;"></div>
<div style="left:394px;top:446px;width:3px;height:1px;background:#000;"></div>
<div style="left:394px;top:451px;width:3px;height:1px;background:#000;"></div>
<div style="left:395px;top:452px;width:1px;height:1px;background:#000;"></div>
<div style="left:355px;top:462px;width:48px;height:15px;box-sizing:border-box;border:1px solid;border-color:#404040 #ffffff #ffffff #404040;background:#ffffff;"></div>
<div style="left:358.00px;top:464.50px;font-family:'Liberation Sans', sans-serif;font-size:10px;font-weight:normal;color:#000;line-height:1;white-space:pre;">1</div>
<div style="left:388px;top:463px;width:15px;height:7px;box-sizing:border-box;border:1px solid;border-color:#ffffff #404040 #404040 #ffffff;background:#d4d0c8;"></div>
<div style="left:388px;top:470px;width:15px;height:7px;box-sizing:border-box;border:1px solid;border-color:#ffffff #404040 #404040 #ffffff;background:#d4d0c8;"></div>
<div style="left:395px;top:466px;width:1px;height:1px;background:#000;"></div>
<div style="left:394px;top:467px;width:3px;height:1px;background:#000;"></div>
<div style="left:394px;top:472px;width:3px;height:1px;background:#000;"></div>
<div style="left:395px;top:473px;width:1px;height:1px;background:#000;"></div>
<div style="left:354px;top:483px;width:15px;height:15px;box-sizing:border-box;border:1px solid;border-color:#ffffff #000000 #000000 #ffffff;background:#d4d0c8;"></div>
<div style="left:355px;top:484px;width:13px;height:13px;box-sizing:border-box;border:1px solid;border-color:#d4d0c8 #808080 #808080 #d4d0c8;"></div>
<svg style="left:354px;top:483px" width="15" height="15" viewBox="0 0 15 15"><path d="M4.5 4.5 H7.5 L10.5 10.5" fill="none" stroke="#000" stroke-width="1.1"/></svg>
<div style="left:371px;top:483px;width:15px;height:15px;box-sizing:border-box;border:1px solid;border-color:#000000 #ffffff #ffffff #000000;background:#d4d0c8;"></div>
<div style="left:372px;top:484px;width:13px;height:13px;box-sizing:border-box;border:1px solid;border-color:#808080 #d4d0c8 #d4d0c8 #808080;"></div>
<div style="left:374px;top:486px;width:10px;height:10px;background:#a4d850;"></div>
<svg style="left:371px;top:483px" width="15" height="15" viewBox="0 0 15 15"><path d="M5.3 10.5 C5.3 5.5 6.3 4.5 7.8 4.5 C9.3 4.5 10.3 5.5 10.3 10.5" fill="none" stroke="#000" stroke-width="1.3"/></svg>
<div style="left:387px;top:483px;width:15px;height:15px;box-sizing:border-box;border:1px solid;border-color:#ffffff #000000 #000000 #ffffff;background:#d4d0c8;"></div>
<div style="left:388px;top:484px;width:13px;height:13px;box-sizing:border-box;border:1px solid;border-color:#d4d0c8 #808080 #808080 #d4d0c8;"></div>
<svg style="left:387px;top:483px" width="15" height="15" viewBox="0 0 15 15"><path d="M4.5 10.5 L7.5 4.5 H10.5" fill="none" stroke="#000" stroke-width="1.1"/></svg>
<div style="left:408px;top:322px;width:57px;height:183px;box-sizing:border-box;border:1px solid;border-color:#ffffff #808080 #808080 #ffffff;"></div>
<div style="left:410px;top:325px;width:52px;height:112px;box-sizing:border-box;border:1px solid;border-color:#ffffff #ffffff #ffffff #ffffff;"></div>
<div style="left:411px;top:326px;width:50px;height:110px;box-sizing:border-box;border:1px solid;border-color:#202020 #202020 #202020 #202020;"></div>
<div style="left:412px;top:327px;width:48px;height:108px;box-sizing:border-box;border:1px solid;border-color:#ffffff #808080 #808080 #ffffff;"></div>
<div style="left:415px;top:332px;width:40px;height:16px;box-sizing:border-box;border:1px solid;border-color:#707070 #ffffff #ffffff #707070;"></div>
<div style="left:416px;top:333px;width:38px;height:14px;background:#000;"></div>
<div style="left:434.01px;top:334.85px;font-family:'Liberation Sans', sans-serif;font-size:11px;font-weight:normal;color:#48e448;line-height:1;white-space:pre;letter-spacing:0.2px;-webkit-text-stroke:0.3px;">0,0</div>
<svg style="left:422px;top:355px" width="29" height="72" shape-rendering="crispEdges"><rect x="0" y="2" width="9" height="2"/><rect x="20" y="2" width="9" height="2"/><rect x="5" y="5" width="4" height="1" fill="#202020"/><rect x="20" y="5" width="4" height="1" fill="#202020"/><rect x="5" y="7" width="4" height="1" fill="#202020"/><rect x="20" y="7" width="4" height="1" fill="#202020"/><rect x="5" y="9" width="4" height="1" fill="#202020"/><rect x="20" y="9" width="4" height="1" fill="#202020"/><rect x="5" y="12" width="4" height="1" fill="#202020"/><rect x="20" y="12" width="4" height="1" fill="#202020"/><rect x="0" y="14" width="9" height="1"/><rect x="20" y="14" width="9" height="1"/><rect x="5" y="16" width="4" height="1" fill="#202020"/><rect x="20" y="16" width="4" height="1" fill="#202020"/><rect x="5" y="18" width="4" height="1" fill="#202020"/><rect x="20" y="18" width="4" height="1" fill="#202020"/><rect x="5" y="21" width="4" height="1" fill="#202020"/><rect x="20" y="21" width="4" height="1" fill="#202020"/><rect x="5" y="23" width="4" height="1" fill="#202020"/><rect x="20" y="23" width="4" height="1" fill="#202020"/><rect x="0" y="25" width="9" height="1"/><rect x="20" y="25" width="9" height="1"/><rect x="5" y="27" width="4" height="1" fill="#202020"/><rect x="20" y="27" width="4" height="1" fill="#202020"/><rect x="5" y="30" width="4" height="1" fill="#202020"/><rect x="20" y="30" width="4" height="1" fill="#202020"/><rect x="5" y="32" width="4" height="1" fill="#202020"/><rect x="20" y="32" width="4" height="1" fill="#202020"/><rect x="5" y="34" width="4" height="1" fill="#202020"/><rect x="20" y="34" width="4" height="1" fill="#202020"/><rect x="0" y="36" width="9" height="1"/><rect x="20" y="36" width="9" height="1"/><rect x="5" y="38" width="4" height="1" fill="#202020"/><rect x="20" y="38" width="4" height="1" fill="#202020"/><rect x="5" y="41" width="4" height="1" fill="#202020"/><rect x="20" y="41" width="4" height="1" fill="#202020"/><rect x="5" y="43" width="4" height="1" fill="#202020"/><rect x="20" y="43" width="4" height="1" fill="#202020"/><rect x="5" y="45" width="4" height="1" fill="#202020"/><rect x="20" y="45" width="4" height="1" fill="#202020"/><rect x="0" y="47" width="9" height="1"/><rect x="20" y="47" width="9" height="1"/><rect x="5" y="50" width="4" height="1" fill="#202020"/><rect x="20" y="50" width="4" height="1" fill="#202020"/><rect x="5" y="52" width="4" height="1" fill="#202020"/><rect x="20" y="52" width="4" height="1" fill="#202020"/><rect x="5" y="54" width="4" height="1" fill="#202020"/><rect x="20" y="54" width="4" height="1" fill="#202020"/><rect x="5" y="56" width="4" height="1" fill="#202020"/><rect x="20" y="56" width="4" height="1" fill="#202020"/><rect x="0" y="59" width="9" height="1"/><rect x="20" y="59" width="9" height="1"/><rect x="5" y="61" width="4" height="1" fill="#202020"/><rect x="20" y="61" width="4" height="1" fill="#202020"/><rect x="5" y="63" width="4" height="1" fill="#202020"/><rect x="20" y="63" width="4" height="1" fill="#202020"/><rect x="5" y="65" width="4" height="1" fill="#202020"/><rect x="20" y="65" width="4" height="1" fill="#202020"/><rect x="5" y="68" width="4" height="1" fill="#202020"/><rect x="20" y="68" width="4" height="1" fill="#202020"/><rect x="0" y="69" width="9" height="2"/><rect x="20" y="69" width="9" height="2"/></svg>
<div style="left:434px;top:357px;width:4px;height:69px;background:#808080;"></div>
<div style="left:435px;top:358px;width:2px;height:67px;background:#585858;"></div>
<div style="left:438px;top:358px;width:1px;height:68px;background:#f0f0f0;"></div>
<div style="left:423px;top:390px;width:2px;height:3px;background:#000;"></div>
<div style="left:450px;top:390px;width:2px;height:3px;background:#000;"></div>
<div style="left:425px;top:387px;width:25px;height:10px;box-sizing:border-box;border:1px solid;border-color:#404040 #202020 #202020 #404040;background:#e8e8e0;"></div>
<div style="left:427px;top:389px;width:21px;height:6px;box-sizing:border-box;border:1px solid;border-color:#0c4c0c #0c4c0c #0c4c0c #0c4c0c;background:#1e8a1e;"></div>
<div style="left:412px;top:441px;width:48px;height:15px;box-sizing:border-box;border:1px solid;border-color:#404040 #ffffff #ffffff #404040;background:#ffffff;"></div>
<div style="left:415.00px;top:443.50px;font-family:'Liberation Sans', sans-serif;font-size:10px;font-weight:normal;color:#000;line-height:1;white-space:pre;">5000</div>
<div style="left:445px;top:442px;width:15px;height:7px;box-sizing:border-box;border:1px solid;border-color:#ffffff #404040 #404040 #ffffff;background:#d4d0c8;"></div>
<div style="left:445px;top:449px;width:15px;height:7px;box-sizing:border-box;border:1px solid;border-color:#ffffff #404040 #404040 #ffffff;background:#d4d0c8;"></div>
<div style="left:452px;top:445px;width:1px;height:1px;background:#000;"></div>
<div style="left:451px;top:446px;width:3px;height:1px;background:#000;"></div>
<div style="left:451px;top:451px;width:3px;height:1px;background:#000;"></div>
<div style="left:452px;top:452px;width:1px;height:1px;background:#000;"></div>
<div style="left:412px;top:462px;width:48px;height:15px;box-sizing:border-box;border:1px solid;border-color:#404040 #ffffff #ffffff #404040;background:#ffffff;"></div>
<div style="left:415.00px;top:464.50px;font-family:'Liberation Sans', sans-serif;font-size:10px;font-weight:normal;color:#000;line-height:1;white-space:pre;">1</div>
<div style="left:445px;top:463px;width:15px;height:7px;box-sizing:border-box;border:1px solid;border-color:#ffffff #404040 #404040 #ffffff;background:#d4d0c8;"></div>
<div style="left:445px;top:470px;width:15px;height:7px;box-sizing:border-box;border:1px solid;border-color:#ffffff #404040 #404040 #ffffff;background:#d4d0c8;"></div>
<div style="left:452px;top:466px;width:1px;height:1px;background:#000;"></div>
<div style="left:451px;top:467px;width:3px;height:1px;background:#000;"></div>
<div style="left:451px;top:472px;width:3px;height:1px;background:#000;"></div>
<div style="left:452px;top:473px;width:1px;height:1px;background:#000;"></div>
<div style="left:412px;top:483px;width:15px;height:15px;box-sizing:border-box;border:1px solid;border-color:#ffffff #000000 #000000 #ffffff;background:#d4d0c8;"></div>
<div style="left:413px;top:484px;width:13px;height:13px;box-sizing:border-box;border:1px solid;border-color:#d4d0c8 #808080 #808080 #d4d0c8;"></div>
<svg style="left:412px;top:483px" width="15" height="15" viewBox="0 0 15 15"><path d="M4.5 4.5 H7.5 L10.5 10.5" fill="none" stroke="#000" stroke-width="1.1"/></svg>
<div style="left:428px;top:483px;width:15px;height:15px;box-sizing:border-box;border:1px solid;border-color:#000000 #ffffff #ffffff #000000;background:#d4d0c8;"></div>
<div style="left:429px;top:484px;width:13px;height:13px;box-sizing:border-box;border:1px solid;border-color:#808080 #d4d0c8 #d4d0c8 #808080;"></div>
<div style="left:431px;top:486px;width:10px;height:10px;background:#a4d850;"></div>
<svg style="left:428px;top:483px" width="15" height="15" viewBox="0 0 15 15"><path d="M5.3 10.5 C5.3 5.5 6.3 4.5 7.8 4.5 C9.3 4.5 10.3 5.5 10.3 10.5" fill="none" stroke="#000" stroke-width="1.3"/></svg>
<div style="left:444px;top:483px;width:15px;height:15px;box-sizing:border-box;border:1px solid;border-color:#ffffff #000000 #000000 #ffffff;background:#d4d0c8;"></div>
<div style="left:445px;top:484px;width:13px;height:13px;box-sizing:border-box;border:1px solid;border-color:#d4d0c8 #808080 #808080 #d4d0c8;"></div>
<svg style="left:444px;top:483px" width="15" height="15" viewBox="0 0 15 15"><path d="M4.5 10.5 L7.5 4.5 H10.5" fill="none" stroke="#000" stroke-width="1.1"/></svg>
<div style="left:465px;top:322px;width:57px;height:183px;box-sizing:border-box;border:1px solid;border-color:#ffffff #808080 #808080 #ffffff;"></div>
<div style="left:467px;top:325px;width:52px;height:112px;box-sizing:border-box;border:1px solid;border-color:#ffffff #ffffff #ffffff #ffffff;"></div>
<div style="left:468px;top:326px;width:50px;height:110px;box-sizing:border-box;border:1px solid;border-color:#202020 #202020 #202020 #202020;"></div>
<div style="left:469px;top:327px;width:48px;height:108px;box-sizing:border-box;border:1px solid;border-color:#ffffff #808080 #808080 #ffffff;"></div>
<div style="left:472px;top:332px;width:40px;height:16px;box-sizing:border-box;border:1px solid;border-color:#707070 #ffffff #ffffff #707070;"></div>
<div style="left:473px;top:333px;width:38px;height:14px;background:#000;"></div>
<div style="left:491.17px;top:334.85px;font-family:'Liberation Sans', sans-serif;font-size:11px;font-weight:normal;color:#48e448;line-height:1;white-space:pre;letter-spacing:0.2px;-webkit-text-stroke:0.3px;">8,0</div>
<svg style="left:479px;top:355px" width="29" height="72" shape-rendering="crispEdges"><rect x="0" y="2" width="9" height="2"/><rect x="20" y="2" width="9" height="2"/><rect x="5" y="5" width="4" height="1" fill="#202020"/><rect x="20" y="5" width="4" height="1" fill="#202020"/><rect x="5" y="7" width="4" height="1" fill="#202020"/><rect x="20" y="7" width="4" height="1" fill="#202020"/><rect x="5" y="9" width="4" height="1" fill="#202020"/><rect x="20" y="9" width="4" height="1" fill="#202020"/><rect x="5" y="12" width="4" height="1" fill="#202020"/><rect x="20" y="12" width="4" height="1" fill="#202020"/><rect x="0" y="14" width="9" height="1"/><rect x="20" y="14" width="9" height="1"/><rect x="5" y="16" width="4" height="1" fill="#202020"/><rect x="20" y="16" width="4" height="1" fill="#202020"/><rect x="5" y="18" width="4" height="1" fill="#202020"/><rect x="20" y="18" width="4" height="1" fill="#202020"/><rect x="5" y="21" width="4" height="1" fill="#202020"/><rect x="20" y="21" width="4" height="1" fill="#202020"/><rect x="5" y="23" width="4" height="1" fill="#202020"/><rect x="20" y="23" width="4" height="1" fill="#202020"/><rect x="0" y="25" width="9" height="1"/><rect x="20" y="25" width="9" height="1"/><rect x="5" y="27" width="4" height="1" fill="#202020"/><rect x="20" y="27" width="4" height="1" fill="#202020"/><rect x="5" y="30" width="4" height="1" fill="#202020"/><rect x="20" y="30" width="4" height="1" fill="#202020"/><rect x="5" y="32" width="4" height="1" fill="#202020"/><rect x="20" y="32" width="4" height="1" fill="#202020"/><rect x="5" y="34" width="4" height="1" fill="#202020"/><rect x="20" y="34" width="4" height="1" fill="#202020"/><rect x="0" y="36" width="9" height="1"/><rect x="20" y="36" width="9" height="1"/><rect x="5" y="38" width="4" height="1" fill="#202020"/><rect x="20" y="38" width="4" height="1" fill="#202020"/><rect x="5" y="41" width="4" height="1" fill="#202020"/><rect x="20" y="41" width="4" height="1" fill="#202020"/><rect x="5" y="43" width="4" height="1" fill="#202020"/><rect x="20" y="43" width="4" height="1" fill="#202020"/><rect x="5" y="45" width="4" height="1" fill="#202020"/><rect x="20" y="45" width="4" height="1" fill="#202020"/><rect x="0" y="47" width="9" height="1"/><rect x="20" y="47" width="9" height="1"/><rect x="5" y="50" width="4" height="1" fill="#202020"/><rect x="20" y="50" width="4" height="1" fill="#202020"/><rect x="5" y="52" width="4" height="1" fill="#202020"/><rect x="20" y="52" width="4" height="1" fill="#202020"/><rect x="5" y="54" width="4" height="1" fill="#202020"/><rect x="20" y="54" width="4" height="1" fill="#202020"/><rect x="5" y="56" width="4" height="1" fill="#202020"/><rect x="20" y="56" width="4" height="1" fill="#202020"/><rect x="0" y="59" width="9" height="1"/><rect x="20" y="59" width="9" height="1"/><rect x="5" y="61" width="4" height="1" fill="#202020"/><rect x="20" y="61" width="4" height="1" fill="#202020"/><rect x="5" y="63" width="4" height="1" fill="#202020"/><rect x="20" y="63" width="4" height="1" fill="#202020"/><rect x="5" y="65" width="4" height="1" fill="#202020"/><rect x="20" y="65" width="4" height="1" fill="#202020"/><rect x="5" y="68" width="4" height="1" fill="#202020"/><rect x="20" y="68" width="4" height="1" fill="#202020"/><rect x="0" y="69" width="9" height="2"/><rect x="20" y="69" width="9" height="2"/></svg>
<div style="left:491px;top:357px;width:4px;height:69px;background:#808080;"></div>
<div style="left:492px;top:358px;width:2px;height:67px;background:#585858;"></div>
<div style="left:495px;top:358px;width:1px;height:68px;background:#f0f0f0;"></div>
<div style="left:480px;top:372px;width:2px;height:3px;background:#000;"></div>
<div style="left:507px;top:372px;width:2px;height:3px;background:#000;"></div>
<div style="left:482px;top:369px;width:25px;height:10px;box-sizing:border-box;border:1px solid;border-color:#404040 #202020 #202020 #404040;background:#e8e8e0;"></div>
<div style="left:484px;top:371px;width:21px;height:6px;box-sizing:border-box;border:1px solid;border-color:#0c4c0c #0c4c0c #0c4c0c #0c4c0c;background:#1e8a1e;"></div>
<div style="left:469px;top:441px;width:48px;height:15px;box-sizing:border-box;border:1px solid;border-color:#404040 #ffffff #ffffff #404040;background:#ffffff;"></div>
<div style="left:472.00px;top:443.50px;font-family:'Liberation Sans', sans-serif;font-size:10px;font-weight:normal;color:#000;line-height:1;white-space:pre;">10000</div>
<div style="left:502px;top:442px;width:15px;height:7px;box-sizing:border-box;border:1px solid;border-color:#ffffff #404040 #404040 #ffffff;background:#d4d0c8;"></div>
<div style="left:502px;top:449px;width:15px;height:7px;box-sizing:border-box;border:1px solid;border-color:#ffffff #404040 #404040 #ffffff;background:#d4d0c8;"></div>
<div style="left:509px;top:445px;width:1px;height:1px;background:#000;"></div>
<div style="left:508px;top:446px;width:3px;height:1px;background:#000;"></div>
<div style="left:508px;top:451px;width:3px;height:1px;background:#000;"></div>
<div style="left:509px;top:452px;width:1px;height:1px;background:#000;"></div>
<div style="left:469px;top:462px;width:48px;height:15px;box-sizing:border-box;border:1px solid;border-color:#404040 #ffffff #ffffff #404040;background:#ffffff;"></div>
<div style="left:472.00px;top:464.50px;font-family:'Liberation Sans', sans-serif;font-size:10px;font-weight:normal;color:#000;line-height:1;white-space:pre;">7</div>
<div style="left:502px;top:463px;width:15px;height:7px;box-sizing:border-box;border:1px solid;border-color:#ffffff #404040 #404040 #ffffff;background:#d4d0c8;"></div>
<div style="left:502px;top:470px;width:15px;height:7px;box-sizing:border-box;border:1px solid;border-color:#ffffff #404040 #404040 #ffffff;background:#d4d0c8;"></div>
<div style="left:509px;top:466px;width:1px;height:1px;background:#000;"></div>
<div style="left:508px;top:467px;width:3px;height:1px;background:#000;"></div>
<div style="left:508px;top:472px;width:3px;height:1px;background:#000;"></div>
<div style="left:509px;top:473px;width:1px;height:1px;background:#000;"></div>
<div style="left:469px;top:483px;width:15px;height:15px;box-sizing:border-box;border:1px solid;border-color:#ffffff #000000 #000000 #ffffff;background:#d4d0c8;"></div>
<div style="left:470px;top:484px;width:13px;height:13px;box-sizing:border-box;border:1px solid;border-color:#d4d0c8 #808080 #808080 #d4d0c8;"></div>
<svg style="left:469px;top:483px" width="15" height="15" viewBox="0 0 15 15"><path d="M4.5 4.5 H7.5 L10.5 10.5" fill="none" stroke="#000" stroke-width="1.1"/></svg>
<div style="left:485px;top:483px;width:15px;height:15px;box-sizing:border-box;border:1px solid;border-color:#000000 #ffffff #ffffff #000000;background:#d4d0c8;"></div>
<div style="left:486px;top:484px;width:13px;height:13px;box-sizing:border-box;border:1px solid;border-color:#808080 #d4d0c8 #d4d0c8 #808080;"></div>
<div style="left:488px;top:486px;width:10px;height:10px;background:#a4d850;"></div>
<svg style="left:485px;top:483px" width="15" height="15" viewBox="0 0 15 15"><path d="M5.3 10.5 C5.3 5.5 6.3 4.5 7.8 4.5 C9.3 4.5 10.3 5.5 10.3 10.5" fill="none" stroke="#000" stroke-width="1.3"/></svg>
<div style="left:501px;top:483px;width:15px;height:15px;box-sizing:border-box;border:1px solid;border-color:#ffffff #000000 #000000 #ffffff;background:#d4d0c8;"></div>
<div style="left:502px;top:484px;width:13px;height:13px;box-sizing:border-box;border:1px solid;border-color:#d4d0c8 #808080 #808080 #d4d0c8;"></div>
<svg style="left:501px;top:483px" width="15" height="15" viewBox="0 0 15 15"><path d="M4.5 10.5 L7.5 4.5 H10.5" fill="none" stroke="#000" stroke-width="1.1"/></svg>
<div style="left:522px;top:322px;width:57px;height:183px;box-sizing:border-box;border:1px solid;border-color:#ffffff #808080 #808080 #ffffff;"></div>
<div style="left:524px;top:325px;width:52px;height:112px;box-sizing:border-box;border:1px solid;border-color:#ffffff #ffffff #ffffff #ffffff;"></div>
<div style="left:525px;top:326px;width:50px;height:110px;box-sizing:border-box;border:1px solid;border-color:#202020 #202020 #202020 #202020;"></div>
<div style="left:526px;top:327px;width:48px;height:108px;box-sizing:border-box;border:1px solid;border-color:#ffffff #808080 #808080 #ffffff;"></div>
<div style="left:529px;top:332px;width:40px;height:16px;box-sizing:border-box;border:1px solid;border-color:#707070 #ffffff #ffffff #707070;"></div>
<div style="left:530px;top:333px;width:38px;height:14px;background:#000;"></div>
<div style="left:548.33px;top:334.85px;font-family:'Liberation Sans', sans-serif;font-size:11px;font-weight:normal;color:#48e448;line-height:1;white-space:pre;letter-spacing:0.2px;-webkit-text-stroke:0.3px;">5,0</div>
<svg style="left:536px;top:355px" width="29" height="72" shape-rendering="crispEdges"><rect x="0" y="2" width="9" height="2"/><rect x="20" y="2" width="9" height="2"/><rect x="5" y="5" width="4" height="1" fill="#202020"/><rect x="20" y="5" width="4" height="1" fill="#202020"/><rect x="5" y="7" width="4" height="1" fill="#202020"/><rect x="20" y="7" width="4" height="1" fill="#202020"/><rect x="5" y="9" width="4" height="1" fill="#202020"/><rect x="20" y="9" width="4" height="1" fill="#202020"/><rect x="5" y="12" width="4" height="1" fill="#202020"/><rect x="20" y="12" width="4" height="1" fill="#202020"/><rect x="0" y="14" width="9" height="1"/><rect x="20" y="14" width="9" height="1"/><rect x="5" y="16" width="4" height="1" fill="#202020"/><rect x="20" y="16" width="4" height="1" fill="#202020"/><rect x="5" y="18" width="4" height="1" fill="#202020"/><rect x="20" y="18" width="4" height="1" fill="#202020"/><rect x="5" y="21" width="4" height="1" fill="#202020"/><rect x="20" y="21" width="4" height="1" fill="#202020"/><rect x="5" y="23" width="4" height="1" fill="#202020"/><rect x="20" y="23" width="4" height="1" fill="#202020"/><rect x="0" y="25" width="9" height="1"/><rect x="20" y="25" width="9" height="1"/><rect x="5" y="27" width="4" height="1" fill="#202020"/><rect x="20" y="27" width="4" height="1" fill="#202020"/><rect x="5" y="30" width="4" height="1" fill="#202020"/><rect x="20" y="30" width="4" height="1" fill="#202020"/><rect x="5" y="32" width="4" height="1" fill="#202020"/><rect x="20" y="32" width="4" height="1" fill="#202020"/><rect x="5" y="34" width="4" height="1" fill="#202020"/><rect x="20" y="34" width="4" height="1" fill="#202020"/><rect x="0" y="36" width="9" height="1"/><rect x="20" y="36" width="9" height="1"/><rect x="5" y="38" width="4" height="1" fill="#202020"/><rect x="20" y="38" width="4" height="1" fill="#202020"/><rect x="5" y="41" width="4" height="1" fill="#202020"/><rect x="20" y="41" width="4" height="1" fill="#202020"/><rect x="5" y="43" width="4" height="1" fill="#202020"/><rect x="20" y="43" width="4" height="1" fill="#202020"/><rect x="5" y="45" width="4" height="1" fill="#202020"/><rect x="20" y="45" width="4" height="1" fill="#202020"/><rect x="0" y="47" width="9" height="1"/><rect x="20" y="47" width="9" height="1"/><rect x="5" y="50" width="4" height="1" fill="#202020"/><rect x="20" y="50" width="4" height="1" fill="#202020"/><rect x="5" y="52" width="4" height="1" fill="#202020"/><rect x="20" y="52" width="4" height="1" fill="#202020"/><rect x="5" y="54" width="4" height="1" fill="#202020"/><rect x="20" y="54" width="4" height="1" fill="#202020"/><rect x="5" y="56" width="4" height="1" fill="#202020"/><rect x="20" y="56" width="4" height="1" fill="#202020"/><rect x="0" y="59" width="9" height="1"/><rect x="20" y="59" width="9" height="1"/><rect x="5" y="61" width="4" height="1" fill="#202020"/><rect x="20" y="61" width="4" height="1" fill="#202020"/><rect x="5" y="63" width="4" height="1" fill="#202020"/><rect x="20" y="63" width="4" height="1" fill="#202020"/><rect x="5" y="65" width="4" height="1" fill="#202020"/><rect x="20" y="65" width="4" height="1" fill="#202020"/><rect x="5" y="68" width="4" height="1" fill="#202020"/><rect x="20" y="68" width="4" height="1" fill="#202020"/><rect x="0" y="69" width="9" height="2"/><rect x="20" y="69" width="9" height="2"/></svg>
<div style="left:548px;top:357px;width:4px;height:69px;background:#808080;"></div>
<div style="left:549px;top:358px;width:2px;height:67px;background:#585858;"></div>
<div style="left:552px;top:358px;width:1px;height:68px;background:#f0f0f0;"></div>
<div style="left:537px;top:379px;width:2px;height:3px;background:#000;"></div>
<div style="left:564px;top:379px;width:2px;height:3px;background:#000;"></div>
<div style="left:539px;top:376px;width:25px;height:10px;box-sizing:border-box;border:1px solid;border-color:#404040 #202020 #202020 #404040;background:#e8e8e0;"></div>
<div style="left:541px;top:378px;width:21px;height:6px;box-sizing:border-box;border:1px solid;border-color:#0c4c0c #0c4c0c #0c4c0c #0c4c0c;background:#1e8a1e;"></div>
<div style="left:526px;top:441px;width:48px;height:15px;box-sizing:border-box;border:1px solid;border-color:#404040 #ffffff #ffffff #404040;background:#ffffff;"></div>
<div style="left:529.00px;top:443.50px;font-family:'Liberation Sans', sans-serif;font-size:10px;font-weight:normal;color:#000;line-height:1;white-space:pre;">15000</div>
<div style="left:559px;top:442px;width:15px;height:7px;box-sizing:border-box;border:1px solid;border-color:#ffffff #404040 #404040 #ffffff;background:#d4d0c8;"></div>
<div style="left:559px;top:449px;width:15px;height:7px;box-sizing:border-box;border:1px solid;border-color:#ffffff #404040 #404040 #ffffff;background:#d4d0c8;"></div>
<div style="left:566px;top:445px;width:1px;height:1px;background:#000;"></div>
<div style="left:565px;top:446px;width:3px;height:1px;background:#000;"></div>
<div style="left:565px;top:451px;width:3px;height:1px;background:#000;"></div>
<div style="left:566px;top:452px;width:1px;height:1px;background:#000;"></div>
<div style="left:526px;top:462px;width:48px;height:15px;box-sizing:border-box;border:1px solid;border-color:#404040 #ffffff #ffffff #404040;background:#ffffff;"></div>
<div style="left:529.00px;top:464.50px;font-family:'Liberation Sans', sans-serif;font-size:10px;font-weight:normal;color:#000;line-height:1;white-space:pre;">1</div>
<div style="left:559px;top:463px;width:15px;height:7px;box-sizing:border-box;border:1px solid;border-color:#ffffff #404040 #404040 #ffffff;background:#d4d0c8;"></div>
<div style="left:559px;top:470px;width:15px;height:7px;box-sizing:border-box;border:1px solid;border-color:#ffffff #404040 #404040 #ffffff;background:#d4d0c8;"></div>
<div style="left:566px;top:466px;width:1px;height:1px;background:#000;"></div>
<div style="left:565px;top:467px;width:3px;height:1px;background:#000;"></div>
<div style="left:565px;top:472px;width:3px;height:1px;background:#000;"></div>
<div style="left:566px;top:473px;width:1px;height:1px;background:#000;"></div>
<div style="left:526px;top:483px;width:15px;height:15px;box-sizing:border-box;border:1px solid;border-color:#ffffff #000000 #000000 #ffffff;background:#d4d0c8;"></div>
<div style="left:527px;top:484px;width:13px;height:13px;box-sizing:border-box;border:1px solid;border-color:#d4d0c8 #808080 #808080 #d4d0c8;"></div>
<svg style="left:526px;top:483px" width="15" height="15" viewBox="0 0 15 15"><path d="M4.5 4.5 H7.5 L10.5 10.5" fill="none" stroke="#000" stroke-width="1.1"/></svg>
<div style="left:542px;top:483px;width:15px;height:15px;box-sizing:border-box;border:1px solid;border-color:#000000 #ffffff #ffffff #000000;background:#d4d0c8;"></div>
<div style="left:543px;top:484px;width:13px;height:13px;box-sizing:border-box;border:1px solid;border-color:#808080 #d4d0c8 #d4d0c8 #808080;"></div>
<div style="left:545px;top:486px;width:10px;height:10px;background:#a4d850;"></div>
<svg style="left:542px;top:483px" width="15" height="15" viewBox="0 0 15 15"><path d="M5.3 10.5 C5.3 5.5 6.3 4.5 7.8 4.5 C9.3 4.5 10.3 5.5 10.3 10.5" fill="none" stroke="#000" stroke-width="1.3"/></svg>
<div style="left:559px;top:483px;width:15px;height:15px;box-sizing:border-box;border:1px solid;border-color:#ffffff #000000 #000000 #ffffff;background:#d4d0c8;"></div>
<div style="left:560px;top:484px;width:13px;height:13px;box-sizing:border-box;border:1px solid;border-color:#d4d0c8 #808080 #808080 #d4d0c8;"></div>
<svg style="left:559px;top:483px" width="15" height="15" viewBox="0 0 15 15"><path d="M4.5 10.5 L7.5 4.5 H10.5" fill="none" stroke="#000" stroke-width="1.1"/></svg>
<div style="left:580px;top:322px;width:57px;height:183px;box-sizing:border-box;border:1px solid;border-color:#ffffff #808080 #808080 #ffffff;"></div>
<div style="left:582px;top:325px;width:52px;height:112px;box-sizing:border-box;border:1px solid;border-color:#ffffff #ffffff #ffffff #ffffff;"></div>
<div style="left:583px;top:326px;width:50px;height:110px;box-sizing:border-box;border:1px solid;border-color:#202020 #202020 #202020 #202020;"></div>
<div style="left:584px;top:327px;width:48px;height:108px;box-sizing:border-box;border:1px solid;border-color:#ffffff #808080 #808080 #ffffff;"></div>
<div style="left:587px;top:332px;width:40px;height:16px;box-sizing:border-box;border:1px solid;border-color:#707070 #ffffff #ffffff #707070;"></div>
<div style="left:588px;top:333px;width:38px;height:14px;background:#000;"></div>
<div style="left:601.63px;top:334.85px;font-family:'Liberation Sans', sans-serif;font-size:11px;font-weight:normal;color:#48e448;line-height:1;white-space:pre;letter-spacing:0.2px;-webkit-text-stroke:0.3px;"><span style="color:#e8e8e8">-</span>4,0</div>
<svg style="left:594px;top:355px" width="29" height="72" shape-rendering="crispEdges"><rect x="0" y="2" width="9" height="2"/><rect x="20" y="2" width="9" height="2"/><rect x="5" y="5" width="4" height="1" fill="#202020"/><rect x="20" y="5" width="4" height="1" fill="#202020"/><rect x="5" y="7" width="4" height="1" fill="#202020"/><rect x="20" y="7" width="4" height="1" fill="#202020"/><rect x="5" y="9" width="4" height="1" fill="#202020"/><rect x="20" y="9" width="4" height="1" fill="#202020"/><rect x="5" y="12" width="4" height="1" fill="#202020"/><rect x="20" y="12" width="4" height="1" fill="#202020"/><rect x="0" y="14" width="9" height="1"/><rect x="20" y="14" width="9" height="1"/><rect x="5" y="16" width="4" height="1" fill="#202020"/><rect x="20" y="16" width="4" height="1" fill="#202020"/><rect x="5" y="18" width="4" height="1" fill="#202020"/><rect x="20" y="18" width="4" height="1" fill="#202020"/><rect x="5" y="21" width="4" height="1" fill="#202020"/><rect x="20" y="21" width="4" height="1" fill="#202020"/><rect x="5" y="23" width="4" height="1" fill="#202020"/><rect x="20" y="23" width="4" height="1" fill="#202020"/><rect x="0" y="25" width="9" height="1"/><rect x="20" y="25" width="9" height="1"/><rect x="5" y="27" width="4" height="1" fill="#202020"/><rect x="20" y="27" width="4" height="1" fill="#202020"/><rect x="5" y="30" width="4" height="1" fill="#202020"/><rect x="20" y="30" width="4" height="1" fill="#202020"/><rect x="5" y="32" width="4" height="1" fill="#202020"/><rect x="20" y="32" width="4" height="1" fill="#202020"/><rect x="5" y="34" width="4" height="1" fill="#202020"/><rect x="20" y="34" width="4" height="1" fill="#202020"/><rect x="0" y="36" width="9" height="1"/><rect x="20" y="36" width="9" height="1"/><rect x="5" y="38" width="4" height="1" fill="#202020"/><rect x="20" y="38" width="4" height="1" fill="#202020"/><rect x="5" y="41" width="4" height="1" fill="#202020"/><rect x="20" y="41" width="4" height="1" fill="#202020"/><rect x="5" y="43" width="4" height="1" fill="#202020"/><rect x="20" y="43" width="4" height="1" fill="#202020"/><rect x="5" y="45" width="4" height="1" fill="#202020"/><rect x="20" y="45" width="4" height="1" fill="#202020"/><rect x="0" y="47" width="9" height="1"/><rect x="20" y="47" width="9" height="1"/><rect x="5" y="50" width="4" height="1" fill="#202020"/><rect x="20" y="50" width="4" height="1" fill="#202020"/><rect x="5" y="52" width="4" height="1" fill="#202020"/><rect x="20" y="52" width="4" height="1" fill="#202020"/><rect x="5" y="54" width="4" height="1" fill="#202020"/><rect x="20" y="54" width="4" height="1" fill="#202020"/><rect x="5" y="56" width="4" height="1" fill="#202020"/><rect x="20" y="56" width="4" height="1" fill="#202020"/><rect x="0" y="59" width="9" height="1"/><rect x="20" y="59" width="9" height="1"/><rect x="5" y="61" width="4" height="1" fill="#202020"/><rect x="20" y="61" width="4" height="1" fill="#202020"/><rect x="5" y="63" width="4" height="1" fill="#202020"/><rect x="20" y="63" width="4" height="1" fill="#202020"/><rect x="5" y="65" width="4" height="1" fill="#202020"/><rect x="20" y="65" width="4" height="1" fill="#202020"/><rect x="5" y="68" width="4" height="1" fill="#202020"/><rect x="20" y="68" width="4" height="1" fill="#202020"/><rect x="0" y="69" width="9" height="2"/><rect x="20" y="69" width="9" height="2"/></svg>
<div style="left:606px;top:357px;width:4px;height:69px;background:#808080;"></div>
<div style="left:607px;top:358px;width:2px;height:67px;background:#585858;"></div>
<div style="left:610px;top:358px;width:1px;height:68px;background:#f0f0f0;"></div>
<div style="left:594px;top:399px;width:2px;height:3px;background:#000;"></div>
<div style="left:621px;top:399px;width:2px;height:3px;background:#000;"></div>
<div style="left:596px;top:396px;width:25px;height:10px;box-sizing:border-box;border:1px solid;border-color:#404040 #202020 #202020 #404040;background:#e8e8e0;"></div>
<div style="left:598px;top:398px;width:21px;height:6px;box-sizing:border-box;border:1px solid;border-color:#0c4c0c #0c4c0c #0c4c0c #0c4c0c;background:#1e8a1e;"></div>
<div style="left:584px;top:441px;width:48px;height:15px;box-sizing:border-box;border:1px solid;border-color:#404040 #ffffff #ffffff #404040;background:#ffffff;"></div>
<div style="left:587.00px;top:443.50px;font-family:'Liberation Sans', sans-serif;font-size:10px;font-weight:normal;color:#000;line-height:1;white-space:pre;">18000</div>
<div style="left:617px;top:442px;width:15px;height:7px;box-sizing:border-box;border:1px solid;border-color:#ffffff #404040 #404040 #ffffff;background:#d4d0c8;"></div>
<div style="left:617px;top:449px;width:15px;height:7px;box-sizing:border-box;border:1px solid;border-color:#ffffff #404040 #404040 #ffffff;background:#d4d0c8;"></div>
<div style="left:624px;top:445px;width:1px;height:1px;background:#000;"></div>
<div style="left:623px;top:446px;width:3px;height:1px;background:#000;"></div>
<div style="left:623px;top:451px;width:3px;height:1px;background:#000;"></div>
<div style="left:624px;top:452px;width:1px;height:1px;background:#000;"></div>
<div style="left:584px;top:462px;width:48px;height:15px;box-sizing:border-box;border:1px solid;border-color:#404040 #ffffff #ffffff #404040;background:#ffffff;"></div>
<div style="left:587.00px;top:464.50px;font-family:'Liberation Sans', sans-serif;font-size:10px;font-weight:normal;color:#000;line-height:1;white-space:pre;">1</div>
<div style="left:617px;top:463px;width:15px;height:7px;box-sizing:border-box;border:1px solid;border-color:#ffffff #404040 #404040 #ffffff;background:#d4d0c8;"></div>
<div style="left:617px;top:470px;width:15px;height:7px;box-sizing:border-box;border:1px solid;border-color:#ffffff #404040 #404040 #ffffff;background:#d4d0c8;"></div>
<div style="left:624px;top:466px;width:1px;height:1px;background:#000;"></div>
<div style="left:623px;top:467px;width:3px;height:1px;background:#000;"></div>
<div style="left:623px;top:472px;width:3px;height:1px;background:#000;"></div>
<div style="left:624px;top:473px;width:1px;height:1px;background:#000;"></div>
<div style="left:583px;top:483px;width:15px;height:15px;box-sizing:border-box;border:1px solid;border-color:#ffffff #000000 #000000 #ffffff;background:#d4d0c8;"></div>
<div style="left:584px;top:484px;width:13px;height:13px;box-sizing:border-box;border:1px solid;border-color:#d4d0c8 #808080 #808080 #d4d0c8;"></div>
<svg style="left:583px;top:483px" width="15" height="15" viewBox="0 0 15 15"><path d="M4.5 4.5 H7.5 L10.5 10.5" fill="none" stroke="#000" stroke-width="1.1"/></svg>
<div style="left:599px;top:483px;width:15px;height:15px;box-sizing:border-box;border:1px solid;border-color:#000000 #ffffff #ffffff #000000;background:#d4d0c8;"></div>
<div style="left:600px;top:484px;width:13px;height:13px;box-sizing:border-box;border:1px solid;border-color:#808080 #d4d0c8 #d4d0c8 #808080;"></div>
<div style="left:602px;top:486px;width:10px;height:10px;background:#a4d850;"></div>
<svg style="left:599px;top:483px" width="15" height="15" viewBox="0 0 15 15"><path d="M5.3 10.5 C5.3 5.5 6.3 4.5 7.8 4.5 C9.3 4.5 10.3 5.5 10.3 10.5" fill="none" stroke="#000" stroke-width="1.3"/></svg>
<div style="left:616px;top:483px;width:15px;height:15px;box-sizing:border-box;border:1px solid;border-color:#ffffff #000000 #000000 #ffffff;background:#d4d0c8;"></div>
<div style="left:617px;top:484px;width:13px;height:13px;box-sizing:border-box;border:1px solid;border-color:#d4d0c8 #808080 #808080 #d4d0c8;"></div>
<svg style="left:616px;top:483px" width="15" height="15" viewBox="0 0 15 15"><path d="M4.5 10.5 L7.5 4.5 H10.5" fill="none" stroke="#000" stroke-width="1.1"/></svg>
<div style="left:637px;top:322px;width:57px;height:183px;box-sizing:border-box;border:1px solid;border-color:#ffffff #808080 #808080 #ffffff;"></div>
<div style="left:639px;top:325px;width:52px;height:112px;box-sizing:border-box;border:1px solid;border-color:#ffffff #ffffff #ffffff #ffffff;"></div>
<div style="left:640px;top:326px;width:50px;height:110px;box-sizing:border-box;border:1px solid;border-color:#202020 #202020 #202020 #202020;"></div>
<div style="left:641px;top:327px;width:48px;height:108px;box-sizing:border-box;border:1px solid;border-color:#ffffff #808080 #808080 #ffffff;"></div>
<div style="left:644px;top:332px;width:40px;height:16px;box-sizing:border-box;border:1px solid;border-color:#707070 #ffffff #ffffff #707070;"></div>
<div style="left:645px;top:333px;width:38px;height:14px;background:#000;"></div>
<div style="left:662.65px;top:334.85px;font-family:'Liberation Sans', sans-serif;font-size:11px;font-weight:normal;color:#48e448;line-height:1;white-space:pre;letter-spacing:0.2px;-webkit-text-stroke:0.3px;">3,0</div>
<svg style="left:651px;top:355px" width="29" height="72" shape-rendering="crispEdges"><rect x="0" y="2" width="9" height="2"/><rect x="20" y="2" width="9" height="2"/><rect x="5" y="5" width="4" height="1" fill="#202020"/><rect x="20" y="5" width="4" height="1" fill="#202020"/><rect x="5" y="7" width="4" height="1" fill="#202020"/><rect x="20" y="7" width="4" height="1" fill="#202020"/><rect x="5" y="9" width="4" height="1" fill="#202020"/><rect x="20" y="9" width="4" height="1" fill="#202020"/><rect x="5" y="12" width="4" height="1" fill="#202020"/><rect x="20" y="12" width="4" height="1" fill="#202020"/><rect x="0" y="14" width="9" height="1"/><rect x="20" y="14" width="9" height="1"/><rect x="5" y="16" width="4" height="1" fill="#202020"/><rect x="20" y="16" width="4" height="1" fill="#202020"/><rect x="5" y="18" width="4" height="1" fill="#202020"/><rect x="20" y="18" width="4" height="1" fill="#202020"/><rect x="5" y="21" width="4" height="1" fill="#202020"/><rect x="20" y="21" width="4" height="1" fill="#202020"/><rect x="5" y="23" width="4" height="1" fill="#202020"/><rect x="20" y="23" width="4" height="1" fill="#202020"/><rect x="0" y="25" width="9" height="1"/><rect x="20" y="25" width="9" height="1"/><rect x="5" y="27" width="4" height="1" fill="#202020"/><rect x="20" y="27" width="4" height="1" fill="#202020"/><rect x="5" y="30" width="4" height="1" fill="#202020"/><rect x="20" y="30" width="4" height="1" fill="#202020"/><rect x="5" y="32" width="4" height="1" fill="#202020"/><rect x="20" y="32" width="4" height="1" fill="#202020"/><rect x="5" y="34" width="4" height="1" fill="#202020"/><rect x="20" y="34" width="4" height="1" fill="#202020"/><rect x="0" y="36" width="9" height="1"/><rect x="20" y="36" width="9" height="1"/><rect x="5" y="38" width="4" height="1" fill="#202020"/><rect x="20" y="38" width="4" height="1" fill="#202020"/><rect x="5" y="41" width="4" height="1" fill="#202020"/><rect x="20" y="41" width="4" height="1" fill="#202020"/><rect x="5" y="43" width="4" height="1" fill="#202020"/><rect x="20" y="43" width="4" height="1" fill="#202020"/><rect x="5" y="45" width="4" height="1" fill="#202020"/><rect x="20" y="45" width="4" height="1" fill="#202020"/><rect x="0" y="47" width="9" height="1"/><rect x="20" y="47" width="9" height="1"/><rect x="5" y="50" width="4" height="1" fill="#202020"/><rect x="20" y="50" width="4" height="1" fill="#202020"/><rect x="5" y="52" width="4" height="1" fill="#202020"/><rect x="20" y="52" width="4" height="1" fill="#202020"/><rect x="5" y="54" width="4" height="1" fill="#202020"/><rect x="20" y="54" width="4" height="1" fill="#202020"/><rect x="5" y="56" width="4" height="1" fill="#202020"/><rect x="20" y="56" width="4" height="1" fill="#202020"/><rect x="0" y="59" width="9" height="1"/><rect x="20" y="59" width="9" height="1"/><rect x="5" y="61" width="4" height="1" fill="#202020"/><rect x="20" y="61" width="4" height="1" fill="#202020"/><rect x="5" y="63" width="4" height="1" fill="#202020"/><rect x="20" y="63" width="4" height="1" fill="#202020"/><rect x="5" y="65" width="4" height="1" fill="#202020"/><rect x="20" y="65" width="4" height="1" fill="#202020"/><rect x="5" y="68" width="4" height="1" fill="#202020"/><rect x="20" y="68" width="4" height="1" fill="#202020"/><rect x="0" y="69" width="9" height="2"/><rect x="20" y="69" width="9" height="2"/></svg>
<div style="left:663px;top:357px;width:4px;height:69px;background:#808080;"></div>
<div style="left:664px;top:358px;width:2px;height:67px;background:#585858;"></div>
<div style="left:667px;top:358px;width:1px;height:68px;background:#f0f0f0;"></div>
<div style="left:651px;top:383px;width:2px;height:3px;background:#000;"></div>
<div style="left:678px;top:383px;width:2px;height:3px;background:#000;"></div>
<div style="left:653px;top:380px;width:25px;height:10px;box-sizing:border-box;border:1px solid;border-color:#404040 #202020 #202020 #404040;background:#e8e8e0;"></div>
<div style="left:655px;top:382px;width:21px;height:6px;box-sizing:border-box;border:1px solid;border-color:#0c4c0c #0c4c0c #0c4c0c #0c4c0c;background:#1e8a1e;"></div>
<div style="left:641px;top:441px;width:48px;height:15px;box-sizing:border-box;border:1px solid;border-color:#404040 #ffffff #ffffff #404040;background:#ffffff;"></div>
<div style="left:644.00px;top:443.50px;font-family:'Liberation Sans', sans-serif;font-size:10px;font-weight:normal;color:#000;line-height:1;white-space:pre;">20000</div>
<div style="left:674px;top:442px;width:15px;height:7px;box-sizing:border-box;border:1px solid;border-color:#ffffff #404040 #404040 #ffffff;background:#d4d0c8;"></div>
<div style="left:674px;top:449px;width:15px;height:7px;box-sizing:border-box;border:1px solid;border-color:#ffffff #404040 #404040 #ffffff;background:#d4d0c8;"></div>
<div style="left:681px;top:445px;width:1px;height:1px;background:#000;"></div>
<div style="left:680px;top:446px;width:3px;height:1px;background:#000;"></div>
<div style="left:680px;top:451px;width:3px;height:1px;background:#000;"></div>
<div style="left:681px;top:452px;width:1px;height:1px;background:#000;"></div>
<div style="left:641px;top:462px;width:48px;height:15px;box-sizing:border-box;border:1px solid;border-color:#404040 #ffffff #ffffff #404040;background:#ffffff;"></div>
<div style="left:644.00px;top:464.50px;font-family:'Liberation Sans', sans-serif;font-size:10px;font-weight:normal;color:#000;line-height:1;white-space:pre;">1</div>
<div style="left:674px;top:463px;width:15px;height:7px;box-sizing:border-box;border:1px solid;border-color:#ffffff #404040 #404040 #ffffff;background:#d4d0c8;"></div>
<div style="left:674px;top:470px;width:15px;height:7px;box-sizing:border-box;border:1px solid;border-color:#ffffff #404040 #404040 #ffffff;background:#d4d0c8;"></div>
<div style="left:681px;top:466px;width:1px;height:1px;background:#000;"></div>
<div style="left:680px;top:467px;width:3px;height:1px;background:#000;"></div>
<div style="left:680px;top:472px;width:3px;height:1px;background:#000;"></div>
<div style="left:681px;top:473px;width:1px;height:1px;background:#000;"></div>
<div style="left:640px;top:483px;width:15px;height:15px;box-sizing:border-box;border:1px solid;border-color:#ffffff #000000 #000000 #ffffff;background:#d4d0c8;"></div>
<div style="left:641px;top:484px;width:13px;height:13px;box-sizing:border-box;border:1px solid;border-color:#d4d0c8 #808080 #808080 #d4d0c8;"></div>
<svg style="left:640px;top:483px" width="15" height="15" viewBox="0 0 15 15"><path d="M4.5 4.5 H7.5 L10.5 10.5" fill="none" stroke="#000" stroke-width="1.1"/></svg>
<div style="left:657px;top:483px;width:15px;height:15px;box-sizing:border-box;border:1px solid;border-color:#000000 #ffffff #ffffff #000000;background:#d4d0c8;"></div>
<div style="left:658px;top:484px;width:13px;height:13px;box-sizing:border-box;border:1px solid;border-color:#808080 #d4d0c8 #d4d0c8 #808080;"></div>
<div style="left:660px;top:486px;width:10px;height:10px;background:#a4d850;"></div>
<svg style="left:657px;top:483px" width="15" height="15" viewBox="0 0 15 15"><path d="M5.3 10.5 C5.3 5.5 6.3 4.5 7.8 4.5 C9.3 4.5 10.3 5.5 10.3 10.5" fill="none" stroke="#000" stroke-width="1.3"/></svg>
<div style="left:673px;top:483px;width:15px;height:15px;box-sizing:border-box;border:1px solid;border-color:#ffffff #000000 #000000 #ffffff;background:#d4d0c8;"></div>
<div style="left:674px;top:484px;width:13px;height:13px;box-sizing:border-box;border:1px solid;border-color:#d4d0c8 #808080 #808080 #d4d0c8;"></div>
<svg style="left:673px;top:483px" width="15" height="15" viewBox="0 0 15 15"><path d="M4.5 10.5 L7.5 4.5 H10.5" fill="none" stroke="#000" stroke-width="1.1"/></svg>
<div style="left:698px;top:321px;width:74px;height:185px;box-sizing:border-box;border:1px solid;border-color:#ffffff #ffffff #ffffff #ffffff;"></div>
<div style="left:699px;top:322px;width:72px;height:183px;box-sizing:border-box;border:1px solid;border-color:#202020 #202020 #202020 #202020;"></div>
<div style="left:700px;top:323px;width:70px;height:181px;box-sizing:border-box;border:1px solid;border-color:#ffffff #808080 #808080 #ffffff;"></div>
<div style="left:705px;top:327px;width:42px;height:17px;box-sizing:border-box;border:1px solid;border-color:#606060 #ffffff #ffffff #606060;"></div>
<div style="left:706px;top:328px;width:40px;height:15px;background:#000;"></div>
<div style="left:712.92px;top:331.15px;font-family:'Liberation Sans', sans-serif;font-size:11px;font-weight:normal;color:#40e040;line-height:1;white-space:pre;letter-spacing:0.6px;-webkit-text-stroke:0.35px;"><span style="color:#e8e8e8">-</span>24,5</div>
<div style="left:749.50px;top:330.73px;font-family:'Liberation Sans', sans-serif;font-size:11.5px;font-weight:bold;color:#000;line-height:1;white-space:pre;transform:scaleX(0.9776);transform-origin:0 0;">dB</div>
<div style="left:721px;top:353px;width:9px;height:2px;background:#000;"></div>
<div style="left:740px;top:353px;width:9px;height:2px;background:#000;"></div>
<div style="left:710.50px;top:350.35px;font-family:'Liberation Sans', sans-serif;font-size:9px;font-weight:normal;color:#000;line-height:1;white-space:pre;transform:scaleX(0.8487);transform-origin:0 0;">20</div>
<div style="left:751.00px;top:350.35px;font-family:'Liberation Sans', sans-serif;font-size:9px;font-weight:normal;color:#000;line-height:1;white-space:pre;transform:scaleX(0.8487);transform-origin:0 0;">20</div>
<div style="left:727px;top:358px;width:4px;height:1px;background:#202020;"></div>
<div style="left:740px;top:358px;width:4px;height:1px;background:#202020;"></div>
<div style="left:727px;top:363px;width:4px;height:1px;background:#202020;"></div>
<div style="left:740px;top:363px;width:4px;height:1px;background:#202020;"></div>
<div style="left:727px;top:368px;width:4px;height:1px;background:#202020;"></div>
<div style="left:740px;top:368px;width:4px;height:1px;background:#202020;"></div>
<div style="left:727px;top:373px;width:4px;height:1px;background:#202020;"></div>
<div style="left:740px;top:373px;width:4px;height:1px;background:#202020;"></div>
<div style="left:721px;top:377px;width:9px;height:2px;background:#000;"></div>
<div style="left:740px;top:377px;width:9px;height:2px;background:#000;"></div>
<div style="left:707.50px;top:374.35px;font-family:'Liberation Sans', sans-serif;font-size:9px;font-weight:normal;color:#000;line-height:1;white-space:pre;transform:scaleX(0.9316);transform-origin:0 0;">-11</div>
<div style="left:751.00px;top:374.35px;font-family:'Liberation Sans', sans-serif;font-size:9px;font-weight:normal;color:#000;line-height:1;white-space:pre;transform:scaleX(0.9316);transform-origin:0 0;">-11</div>
<div style="left:727px;top:383px;width:4px;height:1px;background:#202020;"></div>
<div style="left:740px;top:383px;width:4px;height:1px;background:#202020;"></div>
<div style="left:727px;top:388px;width:4px;height:1px;background:#202020;"></div>
<div style="left:740px;top:388px;width:4px;height:1px;background:#202020;"></div>
<div style="left:727px;top:393px;width:4px;height:1px;background:#202020;"></div>
<div style="left:740px;top:393px;width:4px;height:1px;background:#202020;"></div>
<div style="left:727px;top:398px;width:4px;height:1px;background:#202020;"></div>
<div style="left:740px;top:398px;width:4px;height:1px;background:#202020;"></div>
<div style="left:721px;top:402px;width:9px;height:2px;background:#000;"></div>
<div style="left:740px;top:402px;width:9px;height:2px;background:#000;"></div>
<div style="left:706.50px;top:399.35px;font-family:'Liberation Sans', sans-serif;font-size:9px;font-weight:normal;color:#000;line-height:1;white-space:pre;transform:scaleX(0.9604);transform-origin:0 0;">-42</div>
<div style="left:751.00px;top:399.35px;font-family:'Liberation Sans', sans-serif;font-size:9px;font-weight:normal;color:#000;line-height:1;white-space:pre;transform:scaleX(0.9604);transform-origin:0 0;">-42</div>
<div style="left:727px;top:408px;width:4px;height:1px;background:#202020;"></div>
<div style="left:740px;top:408px;width:4px;height:1px;background:#202020;"></div>
<div style="left:727px;top:412px;width:4px;height:1px;background:#202020;"></div>
<div style="left:740px;top:412px;width:4px;height:1px;background:#202020;"></div>
<div style="left:727px;top:417px;width:4px;height:1px;background:#202020;"></div>
<div style="left:740px;top:417px;width:4px;height:1px;background:#202020;"></div>
<div style="left:727px;top:422px;width:4px;height:1px;background:#202020;"></div>
<div style="left:740px;top:422px;width:4px;height:1px;background:#202020;"></div>
<div style="left:721px;top:426px;width:9px;height:2px;background:#000;"></div>
<div style="left:740px;top:426px;width:9px;height:2px;background:#000;"></div>
<div style="left:706.50px;top:423.35px;font-family:'Liberation Sans', sans-serif;font-size:9px;font-weight:normal;color:#000;line-height:1;white-space:pre;transform:scaleX(0.9604);transform-origin:0 0;">-74</div>
<div style="left:751.00px;top:423.35px;font-family:'Liberation Sans', sans-serif;font-size:9px;font-weight:normal;color:#000;line-height:1;white-space:pre;transform:scaleX(0.9604);transform-origin:0 0;">-74</div>
<div style="left:727px;top:432px;width:4px;height:1px;background:#202020;"></div>
<div style="left:740px;top:432px;width:4px;height:1px;background:#202020;"></div>
<div style="left:727px;top:437px;width:4px;height:1px;background:#202020;"></div>
<div style="left:740px;top:437px;width:4px;height:1px;background:#202020;"></div>
<div style="left:727px;top:442px;width:4px;height:1px;background:#202020;"></div>
<div style="left:740px;top:442px;width:4px;height:1px;background:#202020;"></div>
<div style="left:727px;top:447px;width:4px;height:1px;background:#202020;"></div>
<div style="left:740px;top:447px;width:4px;height:1px;background:#202020;"></div>
<div style="left:721px;top:451px;width:9px;height:2px;background:#000;"></div>
<div style="left:740px;top:451px;width:9px;height:2px;background:#000;"></div>
<div style="left:704.00px;top:448.35px;font-family:'Liberation Sans', sans-serif;font-size:9px;font-weight:normal;color:#000;line-height:1;white-space:pre;transform:scaleX(0.8326);transform-origin:0 0;">-105</div>
<div style="left:751.00px;top:448.35px;font-family:'Liberation Sans', sans-serif;font-size:9px;font-weight:normal;color:#000;line-height:1;white-space:pre;transform:scaleX(0.8326);transform-origin:0 0;">-105</div>
<div style="left:727px;top:457px;width:4px;height:1px;background:#202020;"></div>
<div style="left:740px;top:457px;width:4px;height:1px;background:#202020;"></div>
<div style="left:727px;top:462px;width:4px;height:1px;background:#202020;"></div>
<div style="left:740px;top:462px;width:4px;height:1px;background:#202020;"></div>
<div style="left:727px;top:466px;width:4px;height:1px;background:#202020;"></div>
<div style="left:740px;top:466px;width:4px;height:1px;background:#202020;"></div>
<div style="left:727px;top:471px;width:4px;height:1px;background:#202020;"></div>
<div style="left:740px;top:471px;width:4px;height:1px;background:#202020;"></div>
<div style="left:721px;top:475px;width:9px;height:2px;background:#000;"></div>
<div style="left:740px;top:475px;width:9px;height:2px;background:#000;"></div>
<div style="left:704.00px;top:472.35px;font-family:'Liberation Sans', sans-serif;font-size:9px;font-weight:normal;color:#000;line-height:1;white-space:pre;transform:scaleX(0.8326);transform-origin:0 0;">-136</div>
<div style="left:751.00px;top:472.35px;font-family:'Liberation Sans', sans-serif;font-size:9px;font-weight:normal;color:#000;line-height:1;white-space:pre;transform:scaleX(0.8326);transform-origin:0 0;">-136</div>
<div style="left:733px;top:353px;width:4px;height:124px;background:#808080;"></div>
<div style="left:734px;top:354px;width:2px;height:122px;background:#303030;"></div>
<div style="left:722px;top:384px;width:26px;height:11px;box-sizing:border-box;border:1px solid;border-color:#404040 #202020 #202020 #404040;background:#e8e8e0;"></div>
<div style="left:724px;top:386px;width:22px;height:7px;box-sizing:border-box;border:1px solid;border-color:#0c4c0c #0c4c0c #0c4c0c #0c4c0c;background:#1e8a1e;"></div>
<div style="left:701.00px;top:486.80px;font-family:'Liberation Sans', sans-serif;font-size:12px;font-weight:normal;color:#000;line-height:1;white-space:pre;transform:scaleX(0.8657);transform-origin:0 0;">Speaker Out 1</div>
<div style="left:7px;top:517px;width:763px;height:41px;box-sizing:border-box;border:1px solid;border-color:#808080 #ffffff #ffffff #808080;"></div>
<div style="left:8px;top:518px;width:761px;height:39px;box-sizing:border-box;border:1px solid;border-color:#ffffff #808080 #808080 #ffffff;"></div>
<div style="left:122px;top:529px;width:165px;height:21px;box-sizing:border-box;border:1px solid;border-color:#ffffff #404040 #404040 #ffffff;background:#d4d0c8;"></div>
<div style="left:123px;top:530px;width:163px;height:19px;box-sizing:border-box;border:1px solid;border-color:#d4d0c8 #808080 #808080 #d4d0c8;"></div>
<div style="left:191.00px;top:534.50px;font-family:'Liberation Sans', sans-serif;font-size:10px;font-weight:normal;color:#000;line-height:1;white-space:pre;transform:scaleX(0.8830);transform-origin:0 0;">Flatten</div>
<div style="left:306px;top:529px;width:164px;height:21px;box-sizing:border-box;border:1px solid;border-color:#ffffff #404040 #404040 #ffffff;background:#d4d0c8;"></div>
<div style="left:307px;top:530px;width:162px;height:19px;box-sizing:border-box;border:1px solid;border-color:#d4d0c8 #808080 #808080 #d4d0c8;"></div>
<div style="left:359.50px;top:534.50px;font-family:'Liberation Sans', sans-serif;font-size:10px;font-weight:normal;color:#000;line-height:1;white-space:pre;transform:scaleX(0.8865);transform-origin:0 0;">Default Values</div>
<div style="left:490px;top:529px;width:164px;height:21px;box-sizing:border-box;border:1px solid;border-color:#ffffff #404040 #404040 #ffffff;background:#d4d0c8;"></div>
<div style="left:491px;top:530px;width:162px;height:19px;box-sizing:border-box;border:1px solid;border-color:#d4d0c8 #808080 #808080 #d4d0c8;"></div>
<div style="left:537.75px;top:534.50px;font-family:'Liberation Sans', sans-serif;font-size:10px;font-weight:normal;color:#000;line-height:1;white-space:pre;transform:scaleX(0.8740);transform-origin:0 0;">Sort by frequency</div>
<div style="left:163px;top:54px;width:118px;height:45px;box-sizing:border-box;border:1px solid;border-color:#000000 #000000 #000000 #000000;background:#ffffff;"></div>
<div style="left:166.00px;top:56.50px;font-family:'Liberation Sans', sans-serif;font-size:10px;font-weight:normal;color:#000;line-height:1;white-space:pre;transform:scaleX(0.8823);transform-origin:0 0;">DELAVNIK</div>
<div style="left:166.00px;top:67.30px;font-family:'Liberation Sans', sans-serif;font-size:10px;font-weight:normal;color:#000;line-height:1;white-space:pre;transform:scaleX(0.8442);transform-origin:0 0;">NEDELJA</div>
<div style="left:164px;top:77px;width:116px;height:10px;background:#0a246a;"></div>
<div style="left:166.00px;top:77.50px;font-family:'Liberation Sans', sans-serif;font-size:10px;font-weight:normal;color:#fff;line-height:1;white-space:pre;transform:scaleX(0.8767);transform-origin:0 0;">PRAZNIK</div>
<div style="left:3px;top:572px;width:349px;height:15px;box-sizing:border-box;border:1px solid;border-color:#606060 #ffffff #ffffff #606060;"></div>
<div style="left:354px;top:572px;width:145px;height:15px;box-sizing:border-box;border:1px solid;border-color:#606060 #ffffff #ffffff #606060;"></div>
<div style="left:502px;top:572px;width:79px;height:15px;box-sizing:border-box;border:1px solid;border-color:#606060 #ffffff #ffffff #606060;"></div>
<div style="left:583px;top:572px;width:96px;height:15px;box-sizing:border-box;border:1px solid;border-color:#606060 #ffffff #ffffff #606060;"></div>
<div style="left:681px;top:572px;width:93px;height:15px;box-sizing:border-box;border:1px solid;border-color:#606060 #ffffff #ffffff #606060;"></div>
<div style="left:6.00px;top:574.50px;font-family:'Liberation Sans', sans-serif;font-size:10px;font-weight:normal;color:#000;line-height:1;white-space:pre;transform:scaleX(0.8643);transform-origin:0 0;overflow:hidden;">Opening project "MEKINJE 18.12.2013   2200" from C:\Eigene Dateien\ITEC\SOTWARE\I</div>
<div style="left:373.70px;top:574.50px;font-family:'Liberation Sans', sans-serif;font-size:10px;font-weight:normal;color:#000;line-height:1;white-space:pre;transform:scaleX(0.9263);transform-origin:0 0;">#1 of 5: 19.12.2013 19:14</div>
<div style="left:524.50px;top:574.50px;font-family:'Liberation Sans', sans-serif;font-size:10px;font-weight:normal;color:#800000;line-height:1;white-space:pre;transform:scaleX(0.8727);transform-origin:0 0;">Modified</div>
<div style="left:618.00px;top:574.50px;font-family:'Liberation Sans', sans-serif;font-size:10px;font-weight:normal;color:#000;line-height:1;white-space:pre;transform:scaleX(0.8629);transform-origin:0 0;">15/0/1</div>
<svg style="left:751px;top:573px" width="12" height="12" viewBox="0 0 12 12"><circle cx="6" cy="6" r="4.6" fill="#000"/><circle cx="4.6" cy="4.4" r="1" fill="#fff"/><path d="M8.2 5.8 A2.6 2.6 0 0 1 5.2 8.6" stroke="#707070" stroke-width="1" fill="none"/></svg>
<svg style="left:763px;top:576px" width="11" height="11" viewBox="0 0 11 11" shape-rendering="crispEdges"><rect x="9" y="0" width="2" height="1" fill="#606060"/><rect x="8" y="1" width="2" height="1" fill="#606060"/><rect x="7" y="2" width="2" height="1" fill="#606060"/><rect x="6" y="3" width="2" height="1" fill="#606060"/><rect x="5" y="4" width="2" height="1" fill="#606060"/><rect x="4" y="5" width="2" height="1" fill="#606060"/><rect x="3" y="6" width="2" height="1" fill="#606060"/><rect x="2" y="7" width="2" height="1" fill="#606060"/><rect x="1" y="8" width="2" height="1" fill="#606060"/><rect x="0" y="9" width="2" height="1" fill="#606060"/><rect x="-1" y="10" width="2" height="1" fill="#606060"/><rect x="9" y="4" width="2" height="1" fill="#606060"/><rect x="8" y="5" width="2" height="1" fill="#606060"/><rect x="7" y="6" width="2" height="1" fill="#606060"/><rect x="6" y="7" width="2" height="1" fill="#606060"/><rect x="5" y="8" width="2" height="1" fill="#606060"/><rect x="4" y="9" width="2" height="1" fill="#606060"/><rect x="3" y="10" width="2" height="1" fill="#606060"/><rect x="9" y="8" width="2" height="1" fill="#606060"/><rect x="8" y="9" width="2" height="1" fill="#606060"/><rect x="7" y="10" width="2" height="1" fill="#606060"/></svg>
</body></html>
